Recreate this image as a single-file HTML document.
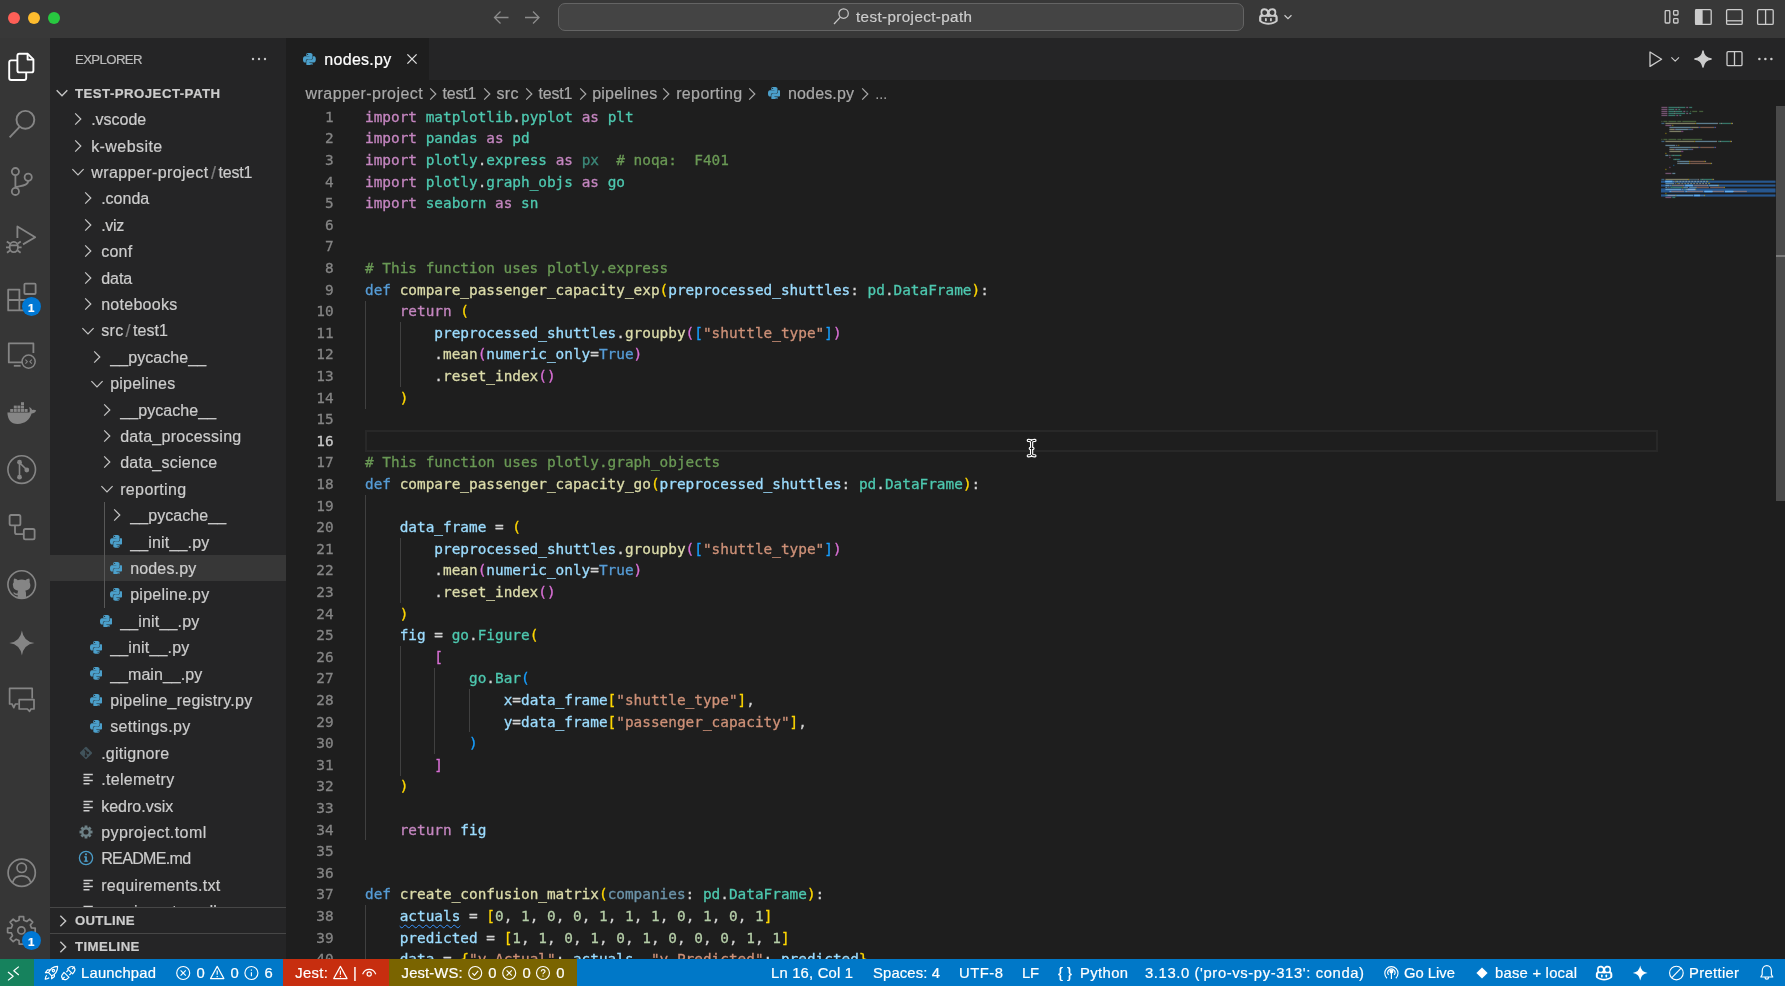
<!DOCTYPE html>
<html lang="en"><head><meta charset="utf-8"><title>nodes.py — test-project-path</title><style>
html,body{margin:0;padding:0;background:#1e1e1e;}
body{width:1785px;height:986px;position:relative;overflow:hidden;font-family:"Liberation Sans", sans-serif;-webkit-font-smoothing:antialiased;}
#root{position:absolute;left:0;top:0;width:1785px;height:986px;will-change:transform;}
.ab{position:absolute;display:block}
.t{position:absolute;white-space:pre;height:20px;line-height:20px;font-family:"Liberation Sans", sans-serif;-webkit-text-stroke:0.2px}
.sl{opacity:.55}
#code{position:absolute;left:0;top:0;width:1785px;height:960px;overflow:hidden;font-family:"DejaVu Sans Mono","Liberation Mono",monospace;font-size:14.4px;line-height:21.6px;color:#d4d4d4;-webkit-text-stroke:0.3px}
.ln{position:absolute;left:286px;width:47.6px;text-align:right;color:#858585;height:21.6px}
.ln.cur{color:#c6c6c6}
.cl{position:absolute;left:365px;white-space:pre;height:21.6px}
.ig{position:absolute;width:1px;background:#404040}
.k{color:#c586c0}.d{color:#569cd6}.f{color:#dcdcaa}.v{color:#9cdcfe}.c{color:#4ec9b0}.s{color:#ce9178}.n{color:#b5cea8}.m{color:#6a9955}
.b1{color:#ffd700}.b2{color:#da70d6}.b3{color:#179fff}
.dim{opacity:.62}
.sq{text-decoration:underline wavy #3794ff 1.25px;text-underline-offset:3px}
</style></head>
<body>
<div id="root">
<div class="ab" style="left:0;top:0;width:1785px;height:38px;background:#383838"></div>
<div class="ab" style="left:8px;top:12px;width:12px;height:12px;border-radius:6px;background:#fe5f57"></div>
<div class="ab" style="left:28px;top:12px;width:12px;height:12px;border-radius:6px;background:#febc2e"></div>
<div class="ab" style="left:48px;top:12px;width:12px;height:12px;border-radius:6px;background:#28c840"></div>
<svg class="ab" style="left:490px;top:7px" width="56" height="22" viewBox="490 7 56 22" fill="none" stroke="#8c8c8c" stroke-width="1.3"><path d="M508.5 17.5H494.5M500.5 11.5L494.5 17.5L500.5 23.5M525 17.5H539M533 11.5L539 17.5L533 23.5"/></svg>
<div class="ab" style="left:558px;top:2.8px;width:684px;height:26.4px;border:1px solid #646464;border-radius:7px;background:#444444;box-sizing:content-box"></div>
<svg class="ab" style="left:832px;top:8px" width="20" height="20" viewBox="832 8 20 20" fill="none" stroke="#c8c8c8" stroke-width="1.2"><circle cx="843.6" cy="13.6" r="4.7"/><path d="M840.4 17.2L834 24"/></svg>
<div class="t" style="left:856px;top:7.4px;font-size:15.2px;color:#cccccc;letter-spacing:0.391px;">test-project-path</div>
<svg class="ab" style="left:1257.1px;top:5.100000000000001px" width="22.799999999999997" height="22.799999999999997" viewBox="-12 -12 24 24"><path fill="#cccccc" fill-rule="evenodd" d="M-4.2 -8.6C-7 -8.6 -8.3 -7 -8.3 -4.6C-8.3 -3.6 -8.2 -2.8 -7.9 -2.2C-9.2 -1.2 -9.8 0 -9.8 1.4V4.2C-9.8 5 -9.4 5.6 -8.8 6C-6.4 7.8 -3.2 8.8 0 8.8C3.2 8.8 6.4 7.8 8.8 6C9.4 5.6 9.8 5 9.8 4.2V1.4C9.8 0 9.2 -1.2 7.9 -2.2C8.2 -2.8 8.3 -3.6 8.3 -4.6C8.3 -7 7 -8.6 4.2 -8.6C2.2 -8.6 0.8 -7.8 0 -6.4C-0.8 -7.8 -2.2 -8.6 -4.2 -8.6ZM-4.2 -6.6C-2.4 -6.6 -1.4 -5.6 -1.4 -4C-1.4 -2.4 -2.4 -1.6 -4.2 -1.6C-5.8 -1.6 -6.4 -2.4 -6.4 -4C-6.4 -5.6 -5.8 -6.6 -4.2 -6.6ZM4.2 -6.6C5.8 -6.6 6.4 -5.6 6.4 -4C6.4 -2.4 5.8 -1.6 4.2 -1.6C2.4 -1.6 1.4 -2.4 1.4 -4C1.4 -5.6 2.4 -6.6 4.2 -6.6ZM-7.4 0.6C-5 0.2 -2 0.2 0 0.6C2 0.2 5 0.2 7.4 0.6V4.6C5.4 6 2.6 6.8 0 6.8C-2.6 6.8 -5.4 6 -7.4 4.6Z"/><rect x="-3.6" y="1.6" width="1.9" height="3.6" rx="0.9" fill="#cccccc"/><rect x="1.7" y="1.6" width="1.9" height="3.6" rx="0.9" fill="#cccccc"/></svg>
<svg class="ab" style="left:1280px;top:8.5px" width="16" height="16" viewBox="-8 -8 16 16"><path d="M-3.472 -1.736L0 1.736L3.472 -1.736" fill="none" stroke="#cccccc" stroke-width="1.2"/></svg>
<svg class="ab" style="left:1660px;top:6px" width="120" height="22" viewBox="1660 6 120 22" fill="none" stroke="#cccccc" stroke-width="1.3"><rect x="1665.2" y="10.6" width="4.6" height="12.4" rx="0.8"/><rect x="1673.6" y="10.6" width="4.4" height="4.4" rx="0.8"/><rect x="1673.6" y="18.6" width="4.4" height="4.4" rx="0.8"/><rect x="1695.6" y="9.6" width="15.6" height="14.8" rx="1.2"/><rect x="1695.6" y="9.6" width="6.4" height="14.8" rx="1" fill="#cccccc"/><rect x="1726.6" y="9.6" width="15.6" height="14.8" rx="1.2"/><path d="M1726.6 20.8H1742.2"/><rect x="1757.6" y="9.6" width="15.6" height="14.8" rx="1.2"/><path d="M1765.6 9.6V24.4"/></svg>
<div class="ab" style="left:0;top:38px;width:50px;height:922px;background:#363636"></div>
<svg class="ab" style="left:0;top:38px" width="50" height="922" viewBox="0 38 50 922" fill="none" stroke-linejoin="round"><g stroke="#ffffff" stroke-width="1.9"><path d="M17.4 70.4V55.8Q17.4 53.8 19.4 53.8H27.8L33.4 59.4V70.4Q33.4 72.4 31.4 72.4H19.4Q17.4 72.4 17.4 70.4Z"/><path d="M27.6 54V59.6H33.2"/><path d="M17.4 60.4H11.2Q9.2 60.4 9.2 62.4V78Q9.2 80 11.2 80H24.2Q26.2 80 26.2 78V72.6"/></g><g stroke="#858585" stroke-width="1.9"><circle cx="25.4" cy="119.8" r="8.9"/><path d="M19.6 126.8L9.6 137.4"/></g><g stroke="#858585" stroke-width="1.8"><circle cx="15.4" cy="171.6" r="3.6"/><circle cx="28.2" cy="177.2" r="3.6"/><circle cx="15.4" cy="191.4" r="3.6"/><path d="M15.4 175.2V187.8M28.2 180.8C28.2 185.4 22 185.6 15.6 187.2"/></g><g stroke="#858585" stroke-width="1.8"><path d="M17.4 238V226.4L35.2 237.2L23 244.4"/><ellipse cx="13.8" cy="247" rx="4.2" ry="5.2"/><path d="M9.8 243.4L6.8 241.4M17.8 243.4L20.8 241.4M9.4 247.4H6M18.2 247.4H21.6M10 250.6L7 252.8M17.6 250.6L20.6 252.8M10 245.4H17.6"/></g><g stroke="#858585" stroke-width="1.8"><path d="M8.2 289.6H19.4V310.4H8.2ZM8.2 300H30.4V310.4H19.4M19.4 300V310.4"/><rect x="24.4" y="283.6" width="11.2" height="10.4" rx="1"/></g><g stroke="#858585" stroke-width="1.8"><path d="M22 362.4H8.8V343.4H33.4V353"/><path d="M13.8 365.8H20.6"/><circle cx="28.6" cy="361.6" r="6.6" stroke-width="1.5"/><path d="M25.4 359.6L27.4 361.6L25.4 363.6M31.8 359.6L29.8 361.6L31.8 363.6" stroke-width="1.1"/></g><g fill="#858585"><path d="M7.4 412.6H29.4C30.2 410.6 29.8 408.6 29 407.2C30.4 407.4 31.6 408.4 32.2 410C33.6 409.4 35.2 409.6 36.2 410.6C35.4 412.6 33.6 413.6 31.6 413.6C29.6 419.6 25.2 424 17.6 424C11 424 7.6 419.8 7.4 412.6Z"/><rect x="10.2" y="409" width="3" height="2.9"/><rect x="13.8" y="409" width="3" height="2.9"/><rect x="17.4" y="409" width="3" height="2.9"/><rect x="21" y="409" width="3" height="2.9"/><rect x="24.6" y="409" width="3" height="2.9"/><rect x="13.8" y="405.6" width="3" height="2.9"/><rect x="17.4" y="405.6" width="3" height="2.9"/><rect x="21" y="405.6" width="3" height="2.9"/><rect x="21" y="402.2" width="3" height="2.9"/></g><g stroke="#858585" stroke-width="1.6"><circle cx="21.7" cy="469.6" r="13.8"/><path d="M19.5 463V476M20.2 463.4L26 469"/></g><g fill="#858585"><circle cx="19.5" cy="462.2" r="2.4"/><circle cx="26.8" cy="470" r="2.4"/><circle cx="19.5" cy="477.2" r="2.4"/></g><g stroke="#858585" stroke-width="1.8"><rect x="9.6" y="515" width="10.8" height="10.4" rx="1.6"/><rect x="23.8" y="529" width="10.8" height="10.4" rx="1.6"/><path d="M15 525.6V532.2Q15 534.2 17 534.2H23.6"/></g><g stroke="#858585" stroke-width="1.6"><circle cx="21.7" cy="584.6" r="13.8"/></g><path fill="#858585" d="M17.6 598V595C15 595.6 14 594 13.2 592.8L14 592.3C15 593 15.6 593.9 17.6 593.5C17.6 592.4 17.7 591.4 18.2 590.8C14.8 590.4 13 588.4 13 585.6C12.6 584.2 13 583 13.8 582.2C13.6 581.2 13.6 579.8 14.2 578.6C15.6 578.6 16.8 579.4 17.8 580.2C19 579.8 20.4 579.6 21.7 579.6C23 579.6 24.4 579.8 25.6 580.2C26.6 579.4 27.8 578.6 29.2 578.6C29.8 579.8 29.8 581.2 29.6 582.2C30 583 30.4 584.2 30.4 585.6C30.4 588.4 28.6 590.4 25.2 590.8C25.8 591.4 26 592.4 26 593.6V598Z"/><path fill="#858585" d="M21.9 630.4Q23.412 641.488 34.5 643Q23.412 644.512 21.9 655.6Q20.387999999999998 644.512 9.299999999999999 643Q20.387999999999998 641.488 21.9 630.4Z"/><g stroke="#858585" stroke-width="1.7"><path d="M18.6 704H15.4L13.8 707.6L12 704H9.6V688.4H32.2V698.4"/><path d="M19.2 699.6H34V709H31L29.6 711.4L27.4 709H19.2Z"/></g><g stroke="#858585" stroke-width="1.7"><circle cx="21.7" cy="872.8" r="13.6"/><circle cx="21.7" cy="867.8" r="4.7"/><path d="M12.6 882.6C13.8 877.6 17 875.8 21.7 875.8C26.4 875.8 29.6 877.6 30.8 882.6"/></g><g stroke="#858585" stroke-width="1.7"><path d="M19.2 916.6L23.6 916.6L23.8 920.3L26.8 921.5L29.6 919.1L32.7 922.2L30.3 925.0L31.5 928.0L35.2 928.2L35.2 932.6L31.5 932.8L30.3 935.8L32.7 938.6L29.6 941.7L26.8 939.3L23.8 940.5L23.6 944.2L19.2 944.2L19.0 940.5L16.0 939.3L13.2 941.7L10.1 938.6L12.5 935.8L11.3 932.8L7.6 932.6L7.6 928.2L11.3 928.0L12.5 925.0L10.1 922.2L13.2 919.1L16.0 921.5L19.0 920.3Z"/><circle cx="21.4" cy="930.4" r="3.6"/></g></svg>
<div class="ab" style="left:21.799999999999997px;top:296.9px;width:19.2px;height:19.2px;border-radius:10px;background:#0078d4"></div>
<div class="t" style="left:28.099999999999998px;top:297.7px;font-size:11.5px;color:#ffffff;font-weight:700;">1</div>
<div class="ab" style="left:21.6px;top:931.1px;width:19.2px;height:19.2px;border-radius:10px;background:#0078d4"></div>
<div class="t" style="left:27.9px;top:931.9px;font-size:11.5px;color:#ffffff;font-weight:700;">1</div>
<div class="ab" style="left:50px;top:38px;width:236px;height:922px;background:#252526"></div>
<div class="t" style="left:75px;top:50.2px;font-size:13.2px;color:#bbbbbb;letter-spacing:-0.618px;">EXPLORER</div>
<svg class="ab" style="left:248px;top:52px" width="22" height="14" viewBox="248 52 22 14" fill="#c5c5c5"><circle cx="253" cy="59" r="1.2"/><circle cx="259" cy="59" r="1.2"/><circle cx="265" cy="59" r="1.2"/></svg>
<div class="ab" style="left:50px;top:554.8px;width:236px;height:26.4px;background:#373737"></div>
<div class="ab" style="left:103.6px;top:502px;width:1px;height:105.6px;background:#585858"></div>
<svg class="ab" style="left:54px;top:85px" width="16" height="16" viewBox="-8 -8 16 16"><path d="M-5.319999999999999 -2.6599999999999997L0 2.6599999999999997L5.319999999999999 -2.6599999999999997" fill="none" stroke="#c5c5c5" stroke-width="1.4"/></svg>
<div class="t" style="left:75px;top:84.3px;font-size:13.2px;color:#cccccc;font-weight:700;letter-spacing:0.483px;">TEST-PROJECT-PATH</div>
<svg class="ab" style="left:70px;top:111.2px" width="16" height="16" viewBox="-8 -8 16 16"><path d="M-2.8 -5.6L2.8 0L-2.8 5.6" fill="none" stroke="#c5c5c5" stroke-width="1.2"/></svg>
<div class="t" style="left:91.2px;top:110.2px;font-size:16px;color:#cccccc;letter-spacing:-0.023px;">.vscode</div>
<svg class="ab" style="left:70px;top:137.6px" width="16" height="16" viewBox="-8 -8 16 16"><path d="M-2.8 -5.6L2.8 0L-2.8 5.6" fill="none" stroke="#c5c5c5" stroke-width="1.2"/></svg>
<div class="t" style="left:91.2px;top:136.6px;font-size:16px;color:#cccccc;letter-spacing:0.428px;">k-website</div>
<svg class="ab" style="left:70px;top:164.3px" width="16" height="16" viewBox="-8 -8 16 16"><path d="M-5.6 -2.8L0 2.8L5.6 -2.8" fill="none" stroke="#c5c5c5" stroke-width="1.2"/></svg>
<div class="t" style="left:91.2px;top:163.0px;font-size:16px;color:#cccccc;letter-spacing:0.417px;">wrapper-project</div>
<div class="t" style="left:211px;top:162.7px;font-size:18px;color:#7c7c7c;">/</div>
<div class="t" style="left:218.5px;top:163.0px;font-size:16px;color:#cccccc;letter-spacing:-0.172px;">test1</div>
<svg class="ab" style="left:80px;top:190.39999999999998px" width="16" height="16" viewBox="-8 -8 16 16"><path d="M-2.8 -5.6L2.8 0L-2.8 5.6" fill="none" stroke="#c5c5c5" stroke-width="1.2"/></svg>
<div class="t" style="left:101.2px;top:189.4px;font-size:16px;color:#cccccc;letter-spacing:-0.009px;">.conda</div>
<svg class="ab" style="left:80px;top:216.8px" width="16" height="16" viewBox="-8 -8 16 16"><path d="M-2.8 -5.6L2.8 0L-2.8 5.6" fill="none" stroke="#c5c5c5" stroke-width="1.2"/></svg>
<div class="t" style="left:101.2px;top:215.8px;font-size:16px;color:#cccccc;letter-spacing:-0.333px;">.viz</div>
<svg class="ab" style="left:80px;top:243.2px" width="16" height="16" viewBox="-8 -8 16 16"><path d="M-2.8 -5.6L2.8 0L-2.8 5.6" fill="none" stroke="#c5c5c5" stroke-width="1.2"/></svg>
<div class="t" style="left:101.2px;top:242.2px;font-size:16px;color:#cccccc;letter-spacing:0.250px;">conf</div>
<svg class="ab" style="left:80px;top:269.59999999999997px" width="16" height="16" viewBox="-8 -8 16 16"><path d="M-2.8 -5.6L2.8 0L-2.8 5.6" fill="none" stroke="#c5c5c5" stroke-width="1.2"/></svg>
<div class="t" style="left:101.2px;top:268.6px;font-size:16px;color:#cccccc;letter-spacing:-0.047px;">data</div>
<svg class="ab" style="left:80px;top:296.0px" width="16" height="16" viewBox="-8 -8 16 16"><path d="M-2.8 -5.6L2.8 0L-2.8 5.6" fill="none" stroke="#c5c5c5" stroke-width="1.2"/></svg>
<div class="t" style="left:101.2px;top:295.0px;font-size:16px;color:#cccccc;letter-spacing:0.270px;">notebooks</div>
<svg class="ab" style="left:80px;top:322.7px" width="16" height="16" viewBox="-8 -8 16 16"><path d="M-5.6 -2.8L0 2.8L5.6 -2.8" fill="none" stroke="#c5c5c5" stroke-width="1.2"/></svg>
<div class="t" style="left:101.2px;top:321.4px;font-size:16px;color:#cccccc;letter-spacing:0.336px;">src</div>
<div class="t" style="left:125.6px;top:321.1px;font-size:18px;color:#7c7c7c;">/</div>
<div class="t" style="left:133px;top:321.4px;font-size:16px;color:#cccccc;letter-spacing:0.078px;">test1</div>
<svg class="ab" style="left:89px;top:348.8px" width="16" height="16" viewBox="-8 -8 16 16"><path d="M-2.8 -5.6L2.8 0L-2.8 5.6" fill="none" stroke="#c5c5c5" stroke-width="1.2"/></svg>
<div class="t" style="left:110.2px;top:347.8px;font-size:16px;color:#cccccc;letter-spacing:0.081px;">__pycache__</div>
<svg class="ab" style="left:89px;top:375.5px" width="16" height="16" viewBox="-8 -8 16 16"><path d="M-5.6 -2.8L0 2.8L5.6 -2.8" fill="none" stroke="#c5c5c5" stroke-width="1.2"/></svg>
<div class="t" style="left:110.2px;top:374.2px;font-size:16px;color:#cccccc;letter-spacing:0.230px;">pipelines</div>
<svg class="ab" style="left:99px;top:401.59999999999997px" width="16" height="16" viewBox="-8 -8 16 16"><path d="M-2.8 -5.6L2.8 0L-2.8 5.6" fill="none" stroke="#c5c5c5" stroke-width="1.2"/></svg>
<div class="t" style="left:120.2px;top:400.6px;font-size:16px;color:#cccccc;letter-spacing:0.081px;">__pycache__</div>
<svg class="ab" style="left:99px;top:427.99999999999994px" width="16" height="16" viewBox="-8 -8 16 16"><path d="M-2.8 -5.6L2.8 0L-2.8 5.6" fill="none" stroke="#c5c5c5" stroke-width="1.2"/></svg>
<div class="t" style="left:120.2px;top:427.0px;font-size:16px;color:#cccccc;letter-spacing:0.256px;">data_processing</div>
<svg class="ab" style="left:99px;top:454.4px" width="16" height="16" viewBox="-8 -8 16 16"><path d="M-2.8 -5.6L2.8 0L-2.8 5.6" fill="none" stroke="#c5c5c5" stroke-width="1.2"/></svg>
<div class="t" style="left:120.2px;top:453.4px;font-size:16px;color:#cccccc;letter-spacing:0.246px;">data_science</div>
<svg class="ab" style="left:99px;top:481.09999999999997px" width="16" height="16" viewBox="-8 -8 16 16"><path d="M-5.6 -2.8L0 2.8L5.6 -2.8" fill="none" stroke="#c5c5c5" stroke-width="1.2"/></svg>
<div class="t" style="left:120.2px;top:479.8px;font-size:16px;color:#cccccc;letter-spacing:0.355px;">reporting</div>
<svg class="ab" style="left:109px;top:507.20000000000005px" width="16" height="16" viewBox="-8 -8 16 16"><path d="M-2.8 -5.6L2.8 0L-2.8 5.6" fill="none" stroke="#c5c5c5" stroke-width="1.2"/></svg>
<div class="t" style="left:130.2px;top:506.2px;font-size:16px;color:#cccccc;letter-spacing:0.081px;">__pycache__</div>
<svg class="ab" style="left:109.6px;top:535.3px" width="12.8" height="12.8" viewBox="0 0 24 24"><path fill="#4b9fca" d="M14.25.18l.9.2.73.26.59.3.45.32.34.34.25.34.16.33.1.3.04.26.02.2-.01.13V8.5l-.05.63-.13.55-.21.46-.26.38-.3.31-.33.25-.35.19-.35.14-.33.1-.3.07-.26.04-.21.02H8.77l-.69.05-.59.14-.5.22-.41.27-.33.32-.27.35-.2.36-.15.37-.1.35-.07.32-.04.27-.02.21v3.06H3.17l-.21-.03-.28-.07-.32-.12-.35-.18-.36-.26-.36-.36-.35-.46-.32-.59-.28-.73-.21-.88-.14-1.05-.05-1.23.06-1.22.16-1.04.24-.87.32-.71.36-.57.4-.44.42-.33.42-.24.4-.16.36-.1.32-.05.24-.01h.16l.06.01h8.16v-.83H6.18l-.01-2.75-.02-.37.05-.34.11-.31.17-.28.25-.26.31-.23.38-.2.44-.18.51-.15.58-.12.64-.1.71-.06.77-.04.84-.02 1.27.05zm-6.3 1.98l-.23.33-.08.41.08.41.23.34.33.22.41.09.41-.09.33-.22.23-.34.08-.41-.08-.41-.23-.33-.33-.22-.41-.09-.41.09zm13.09 3.95l.28.06.32.12.35.18.36.27.36.35.35.47.32.59.28.73.21.88.14 1.04.05 1.23-.06 1.23-.16 1.04-.24.86-.32.71-.36.57-.4.45-.42.33-.42.24-.4.16-.36.09-.32.05-.24.02-.16-.01h-8.22v.82h5.84l.01 2.76.02.36-.05.34-.11.31-.17.29-.25.25-.31.24-.38.2-.44.17-.51.15-.58.13-.64.09-.71.07-.77.04-.84.01-1.27-.04-1.07-.14-.9-.2-.73-.25-.59-.3-.45-.33-.34-.34-.25-.34-.16-.33-.1-.3-.04-.25-.02-.2.01-.13v-5.34l.05-.64.13-.54.21-.46.26-.38.3-.32.33-.24.35-.2.35-.14.33-.1.3-.06.26-.04.21-.02.13-.01h5.84l.69-.05.59-.14.5-.21.41-.28.33-.32.27-.35.2-.36.15-.36.1-.35.07-.32.04-.28.02-.21V6.07h2.09l.14.01zm-6.47 14.25l-.23.33-.08.41.08.41.23.33.33.23.41.08.41-.08.33-.23.23-.33.08-.41-.08-.41-.23-.33-.33-.23-.41-.08-.41.08z"/></svg>
<div class="t" style="left:130.2px;top:532.6px;font-size:16px;color:#cccccc;letter-spacing:0.161px;">__init__.py</div>
<svg class="ab" style="left:109.6px;top:561.7px" width="12.8" height="12.8" viewBox="0 0 24 24"><path fill="#4b9fca" d="M14.25.18l.9.2.73.26.59.3.45.32.34.34.25.34.16.33.1.3.04.26.02.2-.01.13V8.5l-.05.63-.13.55-.21.46-.26.38-.3.31-.33.25-.35.19-.35.14-.33.1-.3.07-.26.04-.21.02H8.77l-.69.05-.59.14-.5.22-.41.27-.33.32-.27.35-.2.36-.15.37-.1.35-.07.32-.04.27-.02.21v3.06H3.17l-.21-.03-.28-.07-.32-.12-.35-.18-.36-.26-.36-.36-.35-.46-.32-.59-.28-.73-.21-.88-.14-1.05-.05-1.23.06-1.22.16-1.04.24-.87.32-.71.36-.57.4-.44.42-.33.42-.24.4-.16.36-.1.32-.05.24-.01h.16l.06.01h8.16v-.83H6.18l-.01-2.75-.02-.37.05-.34.11-.31.17-.28.25-.26.31-.23.38-.2.44-.18.51-.15.58-.12.64-.1.71-.06.77-.04.84-.02 1.27.05zm-6.3 1.98l-.23.33-.08.41.08.41.23.34.33.22.41.09.41-.09.33-.22.23-.34.08-.41-.08-.41-.23-.33-.33-.22-.41-.09-.41.09zm13.09 3.95l.28.06.32.12.35.18.36.27.36.35.35.47.32.59.28.73.21.88.14 1.04.05 1.23-.06 1.23-.16 1.04-.24.86-.32.71-.36.57-.4.45-.42.33-.42.24-.4.16-.36.09-.32.05-.24.02-.16-.01h-8.22v.82h5.84l.01 2.76.02.36-.05.34-.11.31-.17.29-.25.25-.31.24-.38.2-.44.17-.51.15-.58.13-.64.09-.71.07-.77.04-.84.01-1.27-.04-1.07-.14-.9-.2-.73-.25-.59-.3-.45-.33-.34-.34-.25-.34-.16-.33-.1-.3-.04-.25-.02-.2.01-.13v-5.34l.05-.64.13-.54.21-.46.26-.38.3-.32.33-.24.35-.2.35-.14.33-.1.3-.06.26-.04.21-.02.13-.01h5.84l.69-.05.59-.14.5-.21.41-.28.33-.32.27-.35.2-.36.15-.36.1-.35.07-.32.04-.28.02-.21V6.07h2.09l.14.01zm-6.47 14.25l-.23.33-.08.41.08.41.23.33.33.23.41.08.41-.08.33-.23.23-.33.08-.41-.08-.41-.23-.33-.33-.23-.41-.08-.41.08z"/></svg>
<div class="t" style="left:130.2px;top:559.0px;font-size:16px;color:#cccccc;letter-spacing:0.152px;">nodes.py</div>
<svg class="ab" style="left:109.6px;top:588.1px" width="12.8" height="12.8" viewBox="0 0 24 24"><path fill="#4b9fca" d="M14.25.18l.9.2.73.26.59.3.45.32.34.34.25.34.16.33.1.3.04.26.02.2-.01.13V8.5l-.05.63-.13.55-.21.46-.26.38-.3.31-.33.25-.35.19-.35.14-.33.1-.3.07-.26.04-.21.02H8.77l-.69.05-.59.14-.5.22-.41.27-.33.32-.27.35-.2.36-.15.37-.1.35-.07.32-.04.27-.02.21v3.06H3.17l-.21-.03-.28-.07-.32-.12-.35-.18-.36-.26-.36-.36-.35-.46-.32-.59-.28-.73-.21-.88-.14-1.05-.05-1.23.06-1.22.16-1.04.24-.87.32-.71.36-.57.4-.44.42-.33.42-.24.4-.16.36-.1.32-.05.24-.01h.16l.06.01h8.16v-.83H6.18l-.01-2.75-.02-.37.05-.34.11-.31.17-.28.25-.26.31-.23.38-.2.44-.18.51-.15.58-.12.64-.1.71-.06.77-.04.84-.02 1.27.05zm-6.3 1.98l-.23.33-.08.41.08.41.23.34.33.22.41.09.41-.09.33-.22.23-.34.08-.41-.08-.41-.23-.33-.33-.22-.41-.09-.41.09zm13.09 3.95l.28.06.32.12.35.18.36.27.36.35.35.47.32.59.28.73.21.88.14 1.04.05 1.23-.06 1.23-.16 1.04-.24.86-.32.71-.36.57-.4.45-.42.33-.42.24-.4.16-.36.09-.32.05-.24.02-.16-.01h-8.22v.82h5.84l.01 2.76.02.36-.05.34-.11.31-.17.29-.25.25-.31.24-.38.2-.44.17-.51.15-.58.13-.64.09-.71.07-.77.04-.84.01-1.27-.04-1.07-.14-.9-.2-.73-.25-.59-.3-.45-.33-.34-.34-.25-.34-.16-.33-.1-.3-.04-.25-.02-.2.01-.13v-5.34l.05-.64.13-.54.21-.46.26-.38.3-.32.33-.24.35-.2.35-.14.33-.1.3-.06.26-.04.21-.02.13-.01h5.84l.69-.05.59-.14.5-.21.41-.28.33-.32.27-.35.2-.36.15-.36.1-.35.07-.32.04-.28.02-.21V6.07h2.09l.14.01zm-6.47 14.25l-.23.33-.08.41.08.41.23.33.33.23.41.08.41-.08.33-.23.23-.33.08-.41-.08-.41-.23-.33-.33-.23-.41-.08-.41.08z"/></svg>
<div class="t" style="left:130.2px;top:585.4px;font-size:16px;color:#cccccc;letter-spacing:0.250px;">pipeline.py</div>
<svg class="ab" style="left:99.6px;top:614.5px" width="12.8" height="12.8" viewBox="0 0 24 24"><path fill="#4b9fca" d="M14.25.18l.9.2.73.26.59.3.45.32.34.34.25.34.16.33.1.3.04.26.02.2-.01.13V8.5l-.05.63-.13.55-.21.46-.26.38-.3.31-.33.25-.35.19-.35.14-.33.1-.3.07-.26.04-.21.02H8.77l-.69.05-.59.14-.5.22-.41.27-.33.32-.27.35-.2.36-.15.37-.1.35-.07.32-.04.27-.02.21v3.06H3.17l-.21-.03-.28-.07-.32-.12-.35-.18-.36-.26-.36-.36-.35-.46-.32-.59-.28-.73-.21-.88-.14-1.05-.05-1.23.06-1.22.16-1.04.24-.87.32-.71.36-.57.4-.44.42-.33.42-.24.4-.16.36-.1.32-.05.24-.01h.16l.06.01h8.16v-.83H6.18l-.01-2.75-.02-.37.05-.34.11-.31.17-.28.25-.26.31-.23.38-.2.44-.18.51-.15.58-.12.64-.1.71-.06.77-.04.84-.02 1.27.05zm-6.3 1.98l-.23.33-.08.41.08.41.23.34.33.22.41.09.41-.09.33-.22.23-.34.08-.41-.08-.41-.23-.33-.33-.22-.41-.09-.41.09zm13.09 3.95l.28.06.32.12.35.18.36.27.36.35.35.47.32.59.28.73.21.88.14 1.04.05 1.23-.06 1.23-.16 1.04-.24.86-.32.71-.36.57-.4.45-.42.33-.42.24-.4.16-.36.09-.32.05-.24.02-.16-.01h-8.22v.82h5.84l.01 2.76.02.36-.05.34-.11.31-.17.29-.25.25-.31.24-.38.2-.44.17-.51.15-.58.13-.64.09-.71.07-.77.04-.84.01-1.27-.04-1.07-.14-.9-.2-.73-.25-.59-.3-.45-.33-.34-.34-.25-.34-.16-.33-.1-.3-.04-.25-.02-.2.01-.13v-5.34l.05-.64.13-.54.21-.46.26-.38.3-.32.33-.24.35-.2.35-.14.33-.1.3-.06.26-.04.21-.02.13-.01h5.84l.69-.05.59-.14.5-.21.41-.28.33-.32.27-.35.2-.36.15-.36.1-.35.07-.32.04-.28.02-.21V6.07h2.09l.14.01zm-6.47 14.25l-.23.33-.08.41.08.41.23.33.33.23.41.08.41-.08.33-.23.23-.33.08-.41-.08-.41-.23-.33-.33-.23-.41-.08-.41.08z"/></svg>
<div class="t" style="left:120.2px;top:611.8px;font-size:16px;color:#cccccc;letter-spacing:0.161px;">__init__.py</div>
<svg class="ab" style="left:89.6px;top:640.9px" width="12.8" height="12.8" viewBox="0 0 24 24"><path fill="#4b9fca" d="M14.25.18l.9.2.73.26.59.3.45.32.34.34.25.34.16.33.1.3.04.26.02.2-.01.13V8.5l-.05.63-.13.55-.21.46-.26.38-.3.31-.33.25-.35.19-.35.14-.33.1-.3.07-.26.04-.21.02H8.77l-.69.05-.59.14-.5.22-.41.27-.33.32-.27.35-.2.36-.15.37-.1.35-.07.32-.04.27-.02.21v3.06H3.17l-.21-.03-.28-.07-.32-.12-.35-.18-.36-.26-.36-.36-.35-.46-.32-.59-.28-.73-.21-.88-.14-1.05-.05-1.23.06-1.22.16-1.04.24-.87.32-.71.36-.57.4-.44.42-.33.42-.24.4-.16.36-.1.32-.05.24-.01h.16l.06.01h8.16v-.83H6.18l-.01-2.75-.02-.37.05-.34.11-.31.17-.28.25-.26.31-.23.38-.2.44-.18.51-.15.58-.12.64-.1.71-.06.77-.04.84-.02 1.27.05zm-6.3 1.98l-.23.33-.08.41.08.41.23.34.33.22.41.09.41-.09.33-.22.23-.34.08-.41-.08-.41-.23-.33-.33-.22-.41-.09-.41.09zm13.09 3.95l.28.06.32.12.35.18.36.27.36.35.35.47.32.59.28.73.21.88.14 1.04.05 1.23-.06 1.23-.16 1.04-.24.86-.32.71-.36.57-.4.45-.42.33-.42.24-.4.16-.36.09-.32.05-.24.02-.16-.01h-8.22v.82h5.84l.01 2.76.02.36-.05.34-.11.31-.17.29-.25.25-.31.24-.38.2-.44.17-.51.15-.58.13-.64.09-.71.07-.77.04-.84.01-1.27-.04-1.07-.14-.9-.2-.73-.25-.59-.3-.45-.33-.34-.34-.25-.34-.16-.33-.1-.3-.04-.25-.02-.2.01-.13v-5.34l.05-.64.13-.54.21-.46.26-.38.3-.32.33-.24.35-.2.35-.14.33-.1.3-.06.26-.04.21-.02.13-.01h5.84l.69-.05.59-.14.5-.21.41-.28.33-.32.27-.35.2-.36.15-.36.1-.35.07-.32.04-.28.02-.21V6.07h2.09l.14.01zm-6.47 14.25l-.23.33-.08.41.08.41.23.33.33.23.41.08.41-.08.33-.23.23-.33.08-.41-.08-.41-.23-.33-.33-.23-.41-.08-.41.08z"/></svg>
<div class="t" style="left:110.2px;top:638.2px;font-size:16px;color:#cccccc;letter-spacing:0.161px;">__init__.py</div>
<svg class="ab" style="left:89.6px;top:667.3px" width="12.8" height="12.8" viewBox="0 0 24 24"><path fill="#4b9fca" d="M14.25.18l.9.2.73.26.59.3.45.32.34.34.25.34.16.33.1.3.04.26.02.2-.01.13V8.5l-.05.63-.13.55-.21.46-.26.38-.3.31-.33.25-.35.19-.35.14-.33.1-.3.07-.26.04-.21.02H8.77l-.69.05-.59.14-.5.22-.41.27-.33.32-.27.35-.2.36-.15.37-.1.35-.07.32-.04.27-.02.21v3.06H3.17l-.21-.03-.28-.07-.32-.12-.35-.18-.36-.26-.36-.36-.35-.46-.32-.59-.28-.73-.21-.88-.14-1.05-.05-1.23.06-1.22.16-1.04.24-.87.32-.71.36-.57.4-.44.42-.33.42-.24.4-.16.36-.1.32-.05.24-.01h.16l.06.01h8.16v-.83H6.18l-.01-2.75-.02-.37.05-.34.11-.31.17-.28.25-.26.31-.23.38-.2.44-.18.51-.15.58-.12.64-.1.71-.06.77-.04.84-.02 1.27.05zm-6.3 1.98l-.23.33-.08.41.08.41.23.34.33.22.41.09.41-.09.33-.22.23-.34.08-.41-.08-.41-.23-.33-.33-.22-.41-.09-.41.09zm13.09 3.95l.28.06.32.12.35.18.36.27.36.35.35.47.32.59.28.73.21.88.14 1.04.05 1.23-.06 1.23-.16 1.04-.24.86-.32.71-.36.57-.4.45-.42.33-.42.24-.4.16-.36.09-.32.05-.24.02-.16-.01h-8.22v.82h5.84l.01 2.76.02.36-.05.34-.11.31-.17.29-.25.25-.31.24-.38.2-.44.17-.51.15-.58.13-.64.09-.71.07-.77.04-.84.01-1.27-.04-1.07-.14-.9-.2-.73-.25-.59-.3-.45-.33-.34-.34-.25-.34-.16-.33-.1-.3-.04-.25-.02-.2.01-.13v-5.34l.05-.64.13-.54.21-.46.26-.38.3-.32.33-.24.35-.2.35-.14.33-.1.3-.06.26-.04.21-.02.13-.01h5.84l.69-.05.59-.14.5-.21.41-.28.33-.32.27-.35.2-.36.15-.36.1-.35.07-.32.04-.28.02-.21V6.07h2.09l.14.01zm-6.47 14.25l-.23.33-.08.41.08.41.23.33.33.23.41.08.41-.08.33-.23.23-.33.08-.41-.08-.41-.23-.33-.33-.23-.41-.08-.41.08z"/></svg>
<div class="t" style="left:110.2px;top:664.6px;font-size:16px;color:#cccccc;letter-spacing:0.037px;">__main__.py</div>
<svg class="ab" style="left:89.6px;top:693.7px" width="12.8" height="12.8" viewBox="0 0 24 24"><path fill="#4b9fca" d="M14.25.18l.9.2.73.26.59.3.45.32.34.34.25.34.16.33.1.3.04.26.02.2-.01.13V8.5l-.05.63-.13.55-.21.46-.26.38-.3.31-.33.25-.35.19-.35.14-.33.1-.3.07-.26.04-.21.02H8.77l-.69.05-.59.14-.5.22-.41.27-.33.32-.27.35-.2.36-.15.37-.1.35-.07.32-.04.27-.02.21v3.06H3.17l-.21-.03-.28-.07-.32-.12-.35-.18-.36-.26-.36-.36-.35-.46-.32-.59-.28-.73-.21-.88-.14-1.05-.05-1.23.06-1.22.16-1.04.24-.87.32-.71.36-.57.4-.44.42-.33.42-.24.4-.16.36-.1.32-.05.24-.01h.16l.06.01h8.16v-.83H6.18l-.01-2.75-.02-.37.05-.34.11-.31.17-.28.25-.26.31-.23.38-.2.44-.18.51-.15.58-.12.64-.1.71-.06.77-.04.84-.02 1.27.05zm-6.3 1.98l-.23.33-.08.41.08.41.23.34.33.22.41.09.41-.09.33-.22.23-.34.08-.41-.08-.41-.23-.33-.33-.22-.41-.09-.41.09zm13.09 3.95l.28.06.32.12.35.18.36.27.36.35.35.47.32.59.28.73.21.88.14 1.04.05 1.23-.06 1.23-.16 1.04-.24.86-.32.71-.36.57-.4.45-.42.33-.42.24-.4.16-.36.09-.32.05-.24.02-.16-.01h-8.22v.82h5.84l.01 2.76.02.36-.05.34-.11.31-.17.29-.25.25-.31.24-.38.2-.44.17-.51.15-.58.13-.64.09-.71.07-.77.04-.84.01-1.27-.04-1.07-.14-.9-.2-.73-.25-.59-.3-.45-.33-.34-.34-.25-.34-.16-.33-.1-.3-.04-.25-.02-.2.01-.13v-5.34l.05-.64.13-.54.21-.46.26-.38.3-.32.33-.24.35-.2.35-.14.33-.1.3-.06.26-.04.21-.02.13-.01h5.84l.69-.05.59-.14.5-.21.41-.28.33-.32.27-.35.2-.36.15-.36.1-.35.07-.32.04-.28.02-.21V6.07h2.09l.14.01zm-6.47 14.25l-.23.33-.08.41.08.41.23.33.33.23.41.08.41-.08.33-.23.23-.33.08-.41-.08-.41-.23-.33-.33-.23-.41-.08-.41.08z"/></svg>
<div class="t" style="left:110.2px;top:691.0px;font-size:16px;color:#cccccc;letter-spacing:0.280px;">pipeline_registry.py</div>
<svg class="ab" style="left:89.6px;top:720.1px" width="12.8" height="12.8" viewBox="0 0 24 24"><path fill="#4b9fca" d="M14.25.18l.9.2.73.26.59.3.45.32.34.34.25.34.16.33.1.3.04.26.02.2-.01.13V8.5l-.05.63-.13.55-.21.46-.26.38-.3.31-.33.25-.35.19-.35.14-.33.1-.3.07-.26.04-.21.02H8.77l-.69.05-.59.14-.5.22-.41.27-.33.32-.27.35-.2.36-.15.37-.1.35-.07.32-.04.27-.02.21v3.06H3.17l-.21-.03-.28-.07-.32-.12-.35-.18-.36-.26-.36-.36-.35-.46-.32-.59-.28-.73-.21-.88-.14-1.05-.05-1.23.06-1.22.16-1.04.24-.87.32-.71.36-.57.4-.44.42-.33.42-.24.4-.16.36-.1.32-.05.24-.01h.16l.06.01h8.16v-.83H6.18l-.01-2.75-.02-.37.05-.34.11-.31.17-.28.25-.26.31-.23.38-.2.44-.18.51-.15.58-.12.64-.1.71-.06.77-.04.84-.02 1.27.05zm-6.3 1.98l-.23.33-.08.41.08.41.23.34.33.22.41.09.41-.09.33-.22.23-.34.08-.41-.08-.41-.23-.33-.33-.22-.41-.09-.41.09zm13.09 3.95l.28.06.32.12.35.18.36.27.36.35.35.47.32.59.28.73.21.88.14 1.04.05 1.23-.06 1.23-.16 1.04-.24.86-.32.71-.36.57-.4.45-.42.33-.42.24-.4.16-.36.09-.32.05-.24.02-.16-.01h-8.22v.82h5.84l.01 2.76.02.36-.05.34-.11.31-.17.29-.25.25-.31.24-.38.2-.44.17-.51.15-.58.13-.64.09-.71.07-.77.04-.84.01-1.27-.04-1.07-.14-.9-.2-.73-.25-.59-.3-.45-.33-.34-.34-.25-.34-.16-.33-.1-.3-.04-.25-.02-.2.01-.13v-5.34l.05-.64.13-.54.21-.46.26-.38.3-.32.33-.24.35-.2.35-.14.33-.1.3-.06.26-.04.21-.02.13-.01h5.84l.69-.05.59-.14.5-.21.41-.28.33-.32.27-.35.2-.36.15-.36.1-.35.07-.32.04-.28.02-.21V6.07h2.09l.14.01zm-6.47 14.25l-.23.33-.08.41.08.41.23.33.33.23.41.08.41-.08.33-.23.23-.33.08-.41-.08-.41-.23-.33-.33-.23-.41-.08-.41.08z"/></svg>
<div class="t" style="left:110.2px;top:717.4px;font-size:16px;color:#cccccc;letter-spacing:0.352px;">settings.py</div>
<svg class="ab" style="left:78px;top:744.8px" width="16" height="16" viewBox="-8 -8 16 16"><rect x="-4.6" y="-4.6" width="9.2" height="9.2" rx="1" transform="rotate(45)" fill="#41535b"/><path d="M-1.5 -3.5L1.8 -0.2M-0.2 -2.2V3" stroke="#252526" stroke-width="1.2" fill="none"/><circle cx="-0.2" cy="3" r="1.2" fill="#252526"/><circle cx="2" cy="0" r="1.2" fill="#252526"/></svg>
<div class="t" style="left:101.2px;top:743.8px;font-size:16px;color:#cccccc;letter-spacing:0.241px;">.gitignore</div>
<svg class="ab" style="left:80.4px;top:771.4000000000001px" width="16" height="16" viewBox="-8 -8 16 16" stroke="#d0d0d0" stroke-width="1.5"><path d="M-4.5 -4.6H4.8M-4.5 -1.5H1.5M-4.5 1.6H4.8M-4.5 4.7H1.5"/></svg>
<div class="t" style="left:101.2px;top:770.2px;font-size:16px;color:#cccccc;letter-spacing:0.306px;">.telemetry</div>
<svg class="ab" style="left:80.4px;top:797.8000000000001px" width="16" height="16" viewBox="-8 -8 16 16" stroke="#d0d0d0" stroke-width="1.5"><path d="M-4.5 -4.6H4.8M-4.5 -1.5H1.5M-4.5 1.6H4.8M-4.5 4.7H1.5"/></svg>
<div class="t" style="left:101.2px;top:796.6px;font-size:16px;color:#cccccc;letter-spacing:-0.003px;">kedro.vsix</div>
<svg class="ab" style="left:78.3px;top:824.2px" width="16" height="16" viewBox="-8 -8 16 16" fill="#6d8086"><rect x="-1.4" y="-6.5" width="2.8" height="3.2" transform="rotate(0)"/><rect x="-1.4" y="-6.5" width="2.8" height="3.2" transform="rotate(45)"/><rect x="-1.4" y="-6.5" width="2.8" height="3.2" transform="rotate(90)"/><rect x="-1.4" y="-6.5" width="2.8" height="3.2" transform="rotate(135)"/><rect x="-1.4" y="-6.5" width="2.8" height="3.2" transform="rotate(180)"/><rect x="-1.4" y="-6.5" width="2.8" height="3.2" transform="rotate(225)"/><rect x="-1.4" y="-6.5" width="2.8" height="3.2" transform="rotate(270)"/><rect x="-1.4" y="-6.5" width="2.8" height="3.2" transform="rotate(315)"/><circle r="3.7" fill="none" stroke="#6d8086" stroke-width="2.2"/></svg>
<div class="t" style="left:101.2px;top:823.0px;font-size:16px;color:#cccccc;letter-spacing:0.416px;">pyproject.toml</div>
<svg class="ab" style="left:78px;top:850.4px" width="16" height="16" viewBox="-8 -8 16 16"><circle r="6.6" fill="none" stroke="#4b9cc7" stroke-width="1.3"/><rect x="-0.9" y="-1.6" width="1.8" height="5.2" fill="#4b9cc7"/><rect x="-2" y="-1.6" width="2" height="1.1" fill="#4b9cc7"/><rect x="-2.2" y="2.6" width="4.4" height="1.1" fill="#4b9cc7"/><circle cy="-3.7" r="1.1" fill="#4b9cc7"/></svg>
<div class="t" style="left:101.2px;top:849.4px;font-size:16px;color:#cccccc;letter-spacing:-0.641px;">README.md</div>
<svg class="ab" style="left:80.4px;top:877.0px" width="16" height="16" viewBox="-8 -8 16 16" stroke="#d0d0d0" stroke-width="1.5"><path d="M-4.5 -4.6H4.8M-4.5 -1.5H1.5M-4.5 1.6H4.8M-4.5 4.7H1.5"/></svg>
<div class="t" style="left:101.2px;top:875.8px;font-size:16px;color:#cccccc;letter-spacing:0.285px;">requirements.txt</div>
<svg class="ab" style="left:80.4px;top:903.4000000000001px" width="16" height="16" viewBox="-8 -8 16 16" stroke="#d0d0d0" stroke-width="1.5"><path d="M-4.5 -4.6H4.8M-4.5 -1.5H1.5M-4.5 1.6H4.8M-4.5 4.7H1.5"/></svg>
<div class="t" style="left:101.2px;top:902.2px;font-size:16px;color:#cccccc;">session_store.db</div>
<div class="ab" style="left:50px;top:906.8px;width:236px;height:53.2px;background:#252526;border-top:1px solid #474747"></div>
<div class="ab" style="left:50px;top:933.2px;width:236px;height:1px;background:#474747"></div>
<svg class="ab" style="left:55px;top:912.5px" width="16" height="16" viewBox="-8 -8 16 16"><path d="M-2.6599999999999997 -5.319999999999999L2.6599999999999997 0L-2.6599999999999997 5.319999999999999" fill="none" stroke="#c5c5c5" stroke-width="1.4"/></svg>
<div class="t" style="left:75px;top:910.9px;font-size:13.2px;color:#cccccc;font-weight:700;letter-spacing:0.285px;">OUTLINE</div>
<svg class="ab" style="left:55px;top:938.5px" width="16" height="16" viewBox="-8 -8 16 16"><path d="M-2.6599999999999997 -5.319999999999999L2.6599999999999997 0L-2.6599999999999997 5.319999999999999" fill="none" stroke="#c5c5c5" stroke-width="1.4"/></svg>
<div class="t" style="left:75px;top:937.1px;font-size:13.2px;color:#cccccc;font-weight:700;letter-spacing:0.408px;">TIMELINE</div>
<div class="ab" style="left:286px;top:38px;width:1499px;height:42px;background:#252526"></div>
<div class="ab" style="left:286px;top:38px;width:143px;height:42px;background:#1e1e1e"></div>
<div class="ab" style="left:286px;top:80px;width:1499px;height:880px;background:#1e1e1e"></div>
<svg class="ab" style="left:303.4px;top:52.5px" width="12.8" height="12.8" viewBox="0 0 24 24"><path fill="#4b9fca" d="M14.25.18l.9.2.73.26.59.3.45.32.34.34.25.34.16.33.1.3.04.26.02.2-.01.13V8.5l-.05.63-.13.55-.21.46-.26.38-.3.31-.33.25-.35.19-.35.14-.33.1-.3.07-.26.04-.21.02H8.77l-.69.05-.59.14-.5.22-.41.27-.33.32-.27.35-.2.36-.15.37-.1.35-.07.32-.04.27-.02.21v3.06H3.17l-.21-.03-.28-.07-.32-.12-.35-.18-.36-.26-.36-.36-.35-.46-.32-.59-.28-.73-.21-.88-.14-1.05-.05-1.23.06-1.22.16-1.04.24-.87.32-.71.36-.57.4-.44.42-.33.42-.24.4-.16.36-.1.32-.05.24-.01h.16l.06.01h8.16v-.83H6.18l-.01-2.75-.02-.37.05-.34.11-.31.17-.28.25-.26.31-.23.38-.2.44-.18.51-.15.58-.12.64-.1.71-.06.77-.04.84-.02 1.27.05zm-6.3 1.98l-.23.33-.08.41.08.41.23.34.33.22.41.09.41-.09.33-.22.23-.34.08-.41-.08-.41-.23-.33-.33-.22-.41-.09-.41.09zm13.09 3.95l.28.06.32.12.35.18.36.27.36.35.35.47.32.59.28.73.21.88.14 1.04.05 1.23-.06 1.23-.16 1.04-.24.86-.32.71-.36.57-.4.45-.42.33-.42.24-.4.16-.36.09-.32.05-.24.02-.16-.01h-8.22v.82h5.84l.01 2.76.02.36-.05.34-.11.31-.17.29-.25.25-.31.24-.38.2-.44.17-.51.15-.58.13-.64.09-.71.07-.77.04-.84.01-1.27-.04-1.07-.14-.9-.2-.73-.25-.59-.3-.45-.33-.34-.34-.25-.34-.16-.33-.1-.3-.04-.25-.02-.2.01-.13v-5.34l.05-.64.13-.54.21-.46.26-.38.3-.32.33-.24.35-.2.35-.14.33-.1.3-.06.26-.04.21-.02.13-.01h5.84l.69-.05.59-.14.5-.21.41-.28.33-.32.27-.35.2-.36.15-.36.1-.35.07-.32.04-.28.02-.21V6.07h2.09l.14.01zm-6.47 14.25l-.23.33-.08.41.08.41.23.33.33.23.41.08.41-.08.33-.23.23-.33.08-.41-.08-.41-.23-.33-.33-.23-.41-.08-.41.08z"/></svg>
<div class="t" style="left:324.3px;top:49.8px;font-size:16px;color:#ffffff;letter-spacing:0.295px;">nodes.py</div>
<svg class="ab" style="left:404px;top:50.6px" width="16" height="16" viewBox="-8 -8 16 16" stroke="#e0e0e0" stroke-width="1.3"><path d="M-4.6 -4.6L4.6 4.6M4.6 -4.6L-4.6 4.6"/></svg>
<svg class="ab" style="left:1640px;top:47px" width="140" height="24" viewBox="1640 47 140 24" fill="none" stroke="#cccccc" stroke-width="1.3" stroke-linejoin="round"><path d="M1650 52V66.4L1661.6 59.2Z"/><path d="M1671.4 57.4L1675.2 61.2L1679 57.4" stroke-width="1.1"/><rect x="1727" y="51.6" width="15" height="14" rx="1.2"/><path d="M1734.5 51.6V65.6"/><g fill="#cccccc" stroke="none"><circle cx="1759.4" cy="59" r="1.25"/><circle cx="1765.4" cy="59" r="1.25"/><circle cx="1771.4" cy="59" r="1.25"/></g><path fill="#cccccc" d="M1703 50.8Q1703.984 58.016 1711.2 59Q1703.984 59.984 1703 67.2Q1702.016 59.984 1694.8 59Q1702.016 58.016 1703 50.8Z"/></svg>
<div class="t" style="left:305.6px;top:84.2px;font-size:16px;color:#a9a9a9;letter-spacing:0.417px;">wrapper-project</div>
<div class="t" style="left:442.4px;top:84.2px;font-size:16px;color:#a9a9a9;letter-spacing:-0.172px;">test1</div>
<div class="t" style="left:496.4px;top:84.2px;font-size:16px;color:#a9a9a9;letter-spacing:0.336px;">src</div>
<div class="t" style="left:538.4px;top:84.2px;font-size:16px;color:#a9a9a9;letter-spacing:-0.172px;">test1</div>
<div class="t" style="left:592.2px;top:84.2px;font-size:16px;color:#a9a9a9;letter-spacing:0.230px;">pipelines</div>
<div class="t" style="left:676.2px;top:84.2px;font-size:16px;color:#a9a9a9;letter-spacing:0.355px;">reporting</div>
<svg class="ab" style="left:424.6px;top:85.5px" width="16" height="16" viewBox="-8 -8 16 16"><path d="M-2.8 -5.6L2.8 0L-2.8 5.6" fill="none" stroke="#a9a9a9" stroke-width="1.2"/></svg>
<svg class="ab" style="left:478.6px;top:85.5px" width="16" height="16" viewBox="-8 -8 16 16"><path d="M-2.8 -5.6L2.8 0L-2.8 5.6" fill="none" stroke="#a9a9a9" stroke-width="1.2"/></svg>
<svg class="ab" style="left:520.6px;top:85.5px" width="16" height="16" viewBox="-8 -8 16 16"><path d="M-2.8 -5.6L2.8 0L-2.8 5.6" fill="none" stroke="#a9a9a9" stroke-width="1.2"/></svg>
<svg class="ab" style="left:574.6px;top:85.5px" width="16" height="16" viewBox="-8 -8 16 16"><path d="M-2.8 -5.6L2.8 0L-2.8 5.6" fill="none" stroke="#a9a9a9" stroke-width="1.2"/></svg>
<svg class="ab" style="left:658.4px;top:85.5px" width="16" height="16" viewBox="-8 -8 16 16"><path d="M-2.8 -5.6L2.8 0L-2.8 5.6" fill="none" stroke="#a9a9a9" stroke-width="1.2"/></svg>
<svg class="ab" style="left:744.4px;top:85.5px" width="16" height="16" viewBox="-8 -8 16 16"><path d="M-2.8 -5.6L2.8 0L-2.8 5.6" fill="none" stroke="#a9a9a9" stroke-width="1.2"/></svg>
<svg class="ab" style="left:857.4px;top:85.5px" width="16" height="16" viewBox="-8 -8 16 16"><path d="M-2.8 -5.6L2.8 0L-2.8 5.6" fill="none" stroke="#a9a9a9" stroke-width="1.2"/></svg>
<svg class="ab" style="left:767.6px;top:86.5px" width="12.8" height="12.8" viewBox="0 0 24 24"><path fill="#4b9fca" d="M14.25.18l.9.2.73.26.59.3.45.32.34.34.25.34.16.33.1.3.04.26.02.2-.01.13V8.5l-.05.63-.13.55-.21.46-.26.38-.3.31-.33.25-.35.19-.35.14-.33.1-.3.07-.26.04-.21.02H8.77l-.69.05-.59.14-.5.22-.41.27-.33.32-.27.35-.2.36-.15.37-.1.35-.07.32-.04.27-.02.21v3.06H3.17l-.21-.03-.28-.07-.32-.12-.35-.18-.36-.26-.36-.36-.35-.46-.32-.59-.28-.73-.21-.88-.14-1.05-.05-1.23.06-1.22.16-1.04.24-.87.32-.71.36-.57.4-.44.42-.33.42-.24.4-.16.36-.1.32-.05.24-.01h.16l.06.01h8.16v-.83H6.18l-.01-2.75-.02-.37.05-.34.11-.31.17-.28.25-.26.31-.23.38-.2.44-.18.51-.15.58-.12.64-.1.71-.06.77-.04.84-.02 1.27.05zm-6.3 1.98l-.23.33-.08.41.08.41.23.34.33.22.41.09.41-.09.33-.22.23-.34.08-.41-.08-.41-.23-.33-.33-.22-.41-.09-.41.09zm13.09 3.95l.28.06.32.12.35.18.36.27.36.35.35.47.32.59.28.73.21.88.14 1.04.05 1.23-.06 1.23-.16 1.04-.24.86-.32.71-.36.57-.4.45-.42.33-.42.24-.4.16-.36.09-.32.05-.24.02-.16-.01h-8.22v.82h5.84l.01 2.76.02.36-.05.34-.11.31-.17.29-.25.25-.31.24-.38.2-.44.17-.51.15-.58.13-.64.09-.71.07-.77.04-.84.01-1.27-.04-1.07-.14-.9-.2-.73-.25-.59-.3-.45-.33-.34-.34-.25-.34-.16-.33-.1-.3-.04-.25-.02-.2.01-.13v-5.34l.05-.64.13-.54.21-.46.26-.38.3-.32.33-.24.35-.2.35-.14.33-.1.3-.06.26-.04.21-.02.13-.01h5.84l.69-.05.59-.14.5-.21.41-.28.33-.32.27-.35.2-.36.15-.36.1-.35.07-.32.04-.28.02-.21V6.07h2.09l.14.01zm-6.47 14.25l-.23.33-.08.41.08.41.23.33.33.23.41.08.41-.08.33-.23.23-.33.08-.41-.08-.41-.23-.33-.33-.23-.41-.08-.41.08z"/></svg>
<div class="t" style="left:788px;top:84.2px;font-size:16px;color:#a9a9a9;letter-spacing:0.152px;">nodes.py</div>
<div class="t" style="left:875px;top:85.3px;font-size:12.5px;color:#a9a9a9;">…</div>
<div class="ab" style="left:365px;top:430.1px;width:1293px;height:21.9px;border:2px solid #282828;box-sizing:border-box"></div>
<div class="ab" style="left:1775.5px;top:106px;width:9.5px;height:395px;background:#4a4a4a"></div>
<div class="ab" style="left:1775.5px;top:255px;width:9.5px;height:1.5px;background:#7a7a7a"></div>
<svg class="ab" style="left:1655px;top:100px" width="122" height="120" viewBox="1655 100 122 120"><rect x="1661" y="180.6" width="114.5" height="2.2" fill="#27578f"/><rect x="1661" y="184.5" width="114.5" height="2.1" fill="#27578f"/><rect x="1661" y="188.4" width="114.5" height="4.1" fill="#27578f"/><rect x="1661" y="194.4" width="114.5" height="2.2" fill="#27578f"/><rect x="1665" y="180.6" width="7.599999999999909" height="1.8" fill="#2f7fd4"/><rect x="1685" y="184.6" width="8" height="1.8" fill="#2f7fd4"/><rect x="1688" y="188.6" width="7.5" height="1.8" fill="#2f7fd4"/><rect x="1704.5" y="190.6" width="8.0" height="1.8" fill="#2f7fd4"/><rect x="1725" y="190.6" width="8" height="1.8" fill="#2f7fd4"/><rect x="1694" y="194.6" width="6" height="1.8" fill="#2f7fd4"/><rect x="1661.4" y="106.8" width="6.0" height="1.3" fill="#c586c0" opacity="0.5"/>
<rect x="1668.4" y="106.8" width="9.9" height="1.3" fill="#4ec9b0" opacity="0.5"/>
<rect x="1678.3" y="106.8" width="1.0" height="1.3" fill="#d4d4d4" opacity="0.5"/>
<rect x="1679.3" y="106.8" width="6.0" height="1.3" fill="#4ec9b0" opacity="0.5"/>
<rect x="1686.2" y="106.8" width="2.0" height="1.3" fill="#c586c0" opacity="0.5"/>
<rect x="1689.2" y="106.8" width="3.0" height="1.3" fill="#4ec9b0" opacity="0.5"/>
<rect x="1661.4" y="108.8" width="6.0" height="1.3" fill="#c586c0" opacity="0.5"/>
<rect x="1668.4" y="108.8" width="6.0" height="1.3" fill="#4ec9b0" opacity="0.5"/>
<rect x="1675.3" y="108.8" width="2.0" height="1.3" fill="#c586c0" opacity="0.5"/>
<rect x="1678.3" y="108.8" width="2.0" height="1.3" fill="#4ec9b0" opacity="0.5"/>
<rect x="1661.4" y="110.8" width="6.0" height="1.3" fill="#c586c0" opacity="0.5"/>
<rect x="1668.4" y="110.8" width="6.0" height="1.3" fill="#4ec9b0" opacity="0.5"/>
<rect x="1674.3" y="110.8" width="1.0" height="1.3" fill="#d4d4d4" opacity="0.5"/>
<rect x="1675.3" y="110.8" width="7.0" height="1.3" fill="#4ec9b0" opacity="0.5"/>
<rect x="1683.3" y="110.8" width="2.0" height="1.3" fill="#c586c0" opacity="0.5"/>
<rect x="1686.2" y="110.8" width="2.0" height="1.3" fill="#4ec9b0" opacity="0.3"/>
<rect x="1690.2" y="110.8" width="1.0" height="1.3" fill="#6a9955" opacity="0.5"/>
<rect x="1692.2" y="110.8" width="5.0" height="1.3" fill="#6a9955" opacity="0.5"/>
<rect x="1699.2" y="110.8" width="4.0" height="1.3" fill="#6a9955" opacity="0.5"/>
<rect x="1661.4" y="112.8" width="6.0" height="1.3" fill="#c586c0" opacity="0.5"/>
<rect x="1668.4" y="112.8" width="6.0" height="1.3" fill="#4ec9b0" opacity="0.5"/>
<rect x="1674.3" y="112.8" width="1.0" height="1.3" fill="#d4d4d4" opacity="0.5"/>
<rect x="1675.3" y="112.8" width="9.9" height="1.3" fill="#4ec9b0" opacity="0.5"/>
<rect x="1686.2" y="112.8" width="2.0" height="1.3" fill="#c586c0" opacity="0.5"/>
<rect x="1689.2" y="112.8" width="2.0" height="1.3" fill="#4ec9b0" opacity="0.5"/>
<rect x="1661.4" y="114.8" width="6.0" height="1.3" fill="#c586c0" opacity="0.5"/>
<rect x="1668.4" y="114.8" width="7.0" height="1.3" fill="#4ec9b0" opacity="0.5"/>
<rect x="1676.3" y="114.8" width="2.0" height="1.3" fill="#c586c0" opacity="0.5"/>
<rect x="1679.3" y="114.8" width="2.0" height="1.3" fill="#4ec9b0" opacity="0.5"/>
<rect x="1661.4" y="120.8" width="1.0" height="1.3" fill="#6a9955" opacity="0.5"/>
<rect x="1663.4" y="120.8" width="4.0" height="1.3" fill="#6a9955" opacity="0.5"/>
<rect x="1668.4" y="120.8" width="8.0" height="1.3" fill="#6a9955" opacity="0.5"/>
<rect x="1677.3" y="120.8" width="4.0" height="1.3" fill="#6a9955" opacity="0.5"/>
<rect x="1682.3" y="120.8" width="13.9" height="1.3" fill="#6a9955" opacity="0.5"/>
<rect x="1661.4" y="122.8" width="3.0" height="1.3" fill="#569cd6" opacity="0.5"/>
<rect x="1665.4" y="122.8" width="29.8" height="1.3" fill="#dcdcaa" opacity="0.5"/>
<rect x="1695.2" y="122.8" width="1.0" height="1.3" fill="#ffd700" opacity="0.5"/>
<rect x="1696.2" y="122.8" width="20.9" height="1.3" fill="#9cdcfe" opacity="0.5"/>
<rect x="1717.1" y="122.8" width="1.0" height="1.3" fill="#d4d4d4" opacity="0.5"/>
<rect x="1719.1" y="122.8" width="2.0" height="1.3" fill="#4ec9b0" opacity="0.5"/>
<rect x="1721.0" y="122.8" width="1.0" height="1.3" fill="#d4d4d4" opacity="0.5"/>
<rect x="1722.0" y="122.8" width="8.9" height="1.3" fill="#4ec9b0" opacity="0.5"/>
<rect x="1731.0" y="122.8" width="1.0" height="1.3" fill="#ffd700" opacity="0.5"/>
<rect x="1732.0" y="122.8" width="1.0" height="1.3" fill="#d4d4d4" opacity="0.5"/>
<rect x="1665.4" y="124.8" width="6.0" height="1.3" fill="#c586c0" opacity="0.5"/>
<rect x="1672.3" y="124.8" width="1.0" height="1.3" fill="#ffd700" opacity="0.5"/>
<rect x="1669.4" y="126.8" width="20.9" height="1.3" fill="#9cdcfe" opacity="0.5"/>
<rect x="1690.2" y="126.8" width="1.0" height="1.3" fill="#d4d4d4" opacity="0.5"/>
<rect x="1691.2" y="126.8" width="7.0" height="1.3" fill="#dcdcaa" opacity="0.5"/>
<rect x="1698.2" y="126.8" width="1.0" height="1.3" fill="#da70d6" opacity="0.5"/>
<rect x="1699.2" y="126.8" width="1.0" height="1.3" fill="#179fff" opacity="0.5"/>
<rect x="1700.2" y="126.8" width="13.9" height="1.3" fill="#ce9178" opacity="0.5"/>
<rect x="1714.1" y="126.8" width="1.0" height="1.3" fill="#179fff" opacity="0.5"/>
<rect x="1715.1" y="126.8" width="1.0" height="1.3" fill="#da70d6" opacity="0.5"/>
<rect x="1669.4" y="128.8" width="1.0" height="1.3" fill="#d4d4d4" opacity="0.5"/>
<rect x="1670.3" y="128.8" width="4.0" height="1.3" fill="#dcdcaa" opacity="0.5"/>
<rect x="1674.3" y="128.8" width="1.0" height="1.3" fill="#da70d6" opacity="0.5"/>
<rect x="1675.3" y="128.8" width="11.9" height="1.3" fill="#9cdcfe" opacity="0.5"/>
<rect x="1687.2" y="128.8" width="1.0" height="1.3" fill="#d4d4d4" opacity="0.5"/>
<rect x="1688.2" y="128.8" width="4.0" height="1.3" fill="#569cd6" opacity="0.5"/>
<rect x="1692.2" y="128.8" width="1.0" height="1.3" fill="#da70d6" opacity="0.5"/>
<rect x="1669.4" y="130.8" width="1.0" height="1.3" fill="#d4d4d4" opacity="0.5"/>
<rect x="1670.3" y="130.8" width="10.9" height="1.3" fill="#dcdcaa" opacity="0.5"/>
<rect x="1681.3" y="130.8" width="1.0" height="1.3" fill="#da70d6" opacity="0.5"/>
<rect x="1682.3" y="130.8" width="1.0" height="1.3" fill="#da70d6" opacity="0.5"/>
<rect x="1665.4" y="132.8" width="1.0" height="1.3" fill="#ffd700" opacity="0.5"/>
<rect x="1661.4" y="138.8" width="1.0" height="1.3" fill="#6a9955" opacity="0.5"/>
<rect x="1663.4" y="138.8" width="4.0" height="1.3" fill="#6a9955" opacity="0.5"/>
<rect x="1668.4" y="138.8" width="8.0" height="1.3" fill="#6a9955" opacity="0.5"/>
<rect x="1677.3" y="138.8" width="4.0" height="1.3" fill="#6a9955" opacity="0.5"/>
<rect x="1682.3" y="138.8" width="19.9" height="1.3" fill="#6a9955" opacity="0.5"/>
<rect x="1661.4" y="140.8" width="3.0" height="1.3" fill="#569cd6" opacity="0.5"/>
<rect x="1665.4" y="140.8" width="28.8" height="1.3" fill="#dcdcaa" opacity="0.5"/>
<rect x="1694.2" y="140.8" width="1.0" height="1.3" fill="#ffd700" opacity="0.5"/>
<rect x="1695.2" y="140.8" width="20.9" height="1.3" fill="#9cdcfe" opacity="0.5"/>
<rect x="1716.1" y="140.8" width="1.0" height="1.3" fill="#d4d4d4" opacity="0.5"/>
<rect x="1718.1" y="140.8" width="2.0" height="1.3" fill="#4ec9b0" opacity="0.5"/>
<rect x="1720.0" y="140.8" width="1.0" height="1.3" fill="#d4d4d4" opacity="0.5"/>
<rect x="1721.0" y="140.8" width="8.9" height="1.3" fill="#4ec9b0" opacity="0.5"/>
<rect x="1730.0" y="140.8" width="1.0" height="1.3" fill="#ffd700" opacity="0.5"/>
<rect x="1731.0" y="140.8" width="1.0" height="1.3" fill="#d4d4d4" opacity="0.5"/>
<rect x="1665.4" y="144.8" width="9.9" height="1.3" fill="#9cdcfe" opacity="0.5"/>
<rect x="1676.3" y="144.8" width="1.0" height="1.3" fill="#d4d4d4" opacity="0.5"/>
<rect x="1678.3" y="144.8" width="1.0" height="1.3" fill="#ffd700" opacity="0.5"/>
<rect x="1669.4" y="146.8" width="20.9" height="1.3" fill="#9cdcfe" opacity="0.5"/>
<rect x="1690.2" y="146.8" width="1.0" height="1.3" fill="#d4d4d4" opacity="0.5"/>
<rect x="1691.2" y="146.8" width="7.0" height="1.3" fill="#dcdcaa" opacity="0.5"/>
<rect x="1698.2" y="146.8" width="1.0" height="1.3" fill="#da70d6" opacity="0.5"/>
<rect x="1699.2" y="146.8" width="1.0" height="1.3" fill="#179fff" opacity="0.5"/>
<rect x="1700.2" y="146.8" width="13.9" height="1.3" fill="#ce9178" opacity="0.5"/>
<rect x="1714.1" y="146.8" width="1.0" height="1.3" fill="#179fff" opacity="0.5"/>
<rect x="1715.1" y="146.8" width="1.0" height="1.3" fill="#da70d6" opacity="0.5"/>
<rect x="1669.4" y="148.8" width="1.0" height="1.3" fill="#d4d4d4" opacity="0.5"/>
<rect x="1670.3" y="148.8" width="4.0" height="1.3" fill="#dcdcaa" opacity="0.5"/>
<rect x="1674.3" y="148.8" width="1.0" height="1.3" fill="#da70d6" opacity="0.5"/>
<rect x="1675.3" y="148.8" width="11.9" height="1.3" fill="#9cdcfe" opacity="0.5"/>
<rect x="1687.2" y="148.8" width="1.0" height="1.3" fill="#d4d4d4" opacity="0.5"/>
<rect x="1688.2" y="148.8" width="4.0" height="1.3" fill="#569cd6" opacity="0.5"/>
<rect x="1692.2" y="148.8" width="1.0" height="1.3" fill="#da70d6" opacity="0.5"/>
<rect x="1669.4" y="150.8" width="1.0" height="1.3" fill="#d4d4d4" opacity="0.5"/>
<rect x="1670.3" y="150.8" width="10.9" height="1.3" fill="#dcdcaa" opacity="0.5"/>
<rect x="1681.3" y="150.8" width="1.0" height="1.3" fill="#da70d6" opacity="0.5"/>
<rect x="1682.3" y="150.8" width="1.0" height="1.3" fill="#da70d6" opacity="0.5"/>
<rect x="1665.4" y="152.8" width="1.0" height="1.3" fill="#ffd700" opacity="0.5"/>
<rect x="1665.4" y="154.8" width="3.0" height="1.3" fill="#9cdcfe" opacity="0.5"/>
<rect x="1669.4" y="154.8" width="1.0" height="1.3" fill="#d4d4d4" opacity="0.5"/>
<rect x="1671.3" y="154.8" width="2.0" height="1.3" fill="#4ec9b0" opacity="0.5"/>
<rect x="1673.3" y="154.8" width="1.0" height="1.3" fill="#d4d4d4" opacity="0.5"/>
<rect x="1674.3" y="154.8" width="6.0" height="1.3" fill="#4ec9b0" opacity="0.5"/>
<rect x="1680.3" y="154.8" width="1.0" height="1.3" fill="#ffd700" opacity="0.5"/>
<rect x="1669.4" y="156.8" width="1.0" height="1.3" fill="#da70d6" opacity="0.5"/>
<rect x="1673.3" y="158.8" width="2.0" height="1.3" fill="#4ec9b0" opacity="0.5"/>
<rect x="1675.3" y="158.8" width="1.0" height="1.3" fill="#d4d4d4" opacity="0.5"/>
<rect x="1676.3" y="158.8" width="3.0" height="1.3" fill="#4ec9b0" opacity="0.5"/>
<rect x="1679.3" y="158.8" width="1.0" height="1.3" fill="#179fff" opacity="0.5"/>
<rect x="1677.3" y="160.8" width="1.0" height="1.3" fill="#9cdcfe" opacity="0.5"/>
<rect x="1678.3" y="160.8" width="1.0" height="1.3" fill="#d4d4d4" opacity="0.5"/>
<rect x="1679.3" y="160.8" width="9.9" height="1.3" fill="#9cdcfe" opacity="0.5"/>
<rect x="1689.2" y="160.8" width="1.0" height="1.3" fill="#ffd700" opacity="0.5"/>
<rect x="1690.2" y="160.8" width="13.9" height="1.3" fill="#ce9178" opacity="0.5"/>
<rect x="1704.1" y="160.8" width="1.0" height="1.3" fill="#ffd700" opacity="0.5"/>
<rect x="1705.1" y="160.8" width="1.0" height="1.3" fill="#d4d4d4" opacity="0.5"/>
<rect x="1677.3" y="162.8" width="1.0" height="1.3" fill="#9cdcfe" opacity="0.5"/>
<rect x="1678.3" y="162.8" width="1.0" height="1.3" fill="#d4d4d4" opacity="0.5"/>
<rect x="1679.3" y="162.8" width="9.9" height="1.3" fill="#9cdcfe" opacity="0.5"/>
<rect x="1689.2" y="162.8" width="1.0" height="1.3" fill="#ffd700" opacity="0.5"/>
<rect x="1690.2" y="162.8" width="19.9" height="1.3" fill="#ce9178" opacity="0.5"/>
<rect x="1710.1" y="162.8" width="1.0" height="1.3" fill="#ffd700" opacity="0.5"/>
<rect x="1711.1" y="162.8" width="1.0" height="1.3" fill="#d4d4d4" opacity="0.5"/>
<rect x="1673.3" y="164.8" width="1.0" height="1.3" fill="#179fff" opacity="0.5"/>
<rect x="1669.4" y="166.8" width="1.0" height="1.3" fill="#da70d6" opacity="0.5"/>
<rect x="1665.4" y="168.8" width="1.0" height="1.3" fill="#ffd700" opacity="0.5"/>
<rect x="1665.4" y="172.8" width="6.0" height="1.3" fill="#c586c0" opacity="0.5"/>
<rect x="1672.3" y="172.8" width="3.0" height="1.3" fill="#9cdcfe" opacity="0.5"/>
<rect x="1661.4" y="178.8" width="3.0" height="1.3" fill="#569cd6" opacity="0.5"/>
<rect x="1665.4" y="178.8" width="22.9" height="1.3" fill="#dcdcaa" opacity="0.5"/>
<rect x="1688.2" y="178.8" width="1.0" height="1.3" fill="#ffd700" opacity="0.5"/>
<rect x="1689.2" y="178.8" width="8.9" height="1.3" fill="#9cdcfe" opacity="0.3"/>
<rect x="1698.2" y="178.8" width="1.0" height="1.3" fill="#d4d4d4" opacity="0.5"/>
<rect x="1700.2" y="178.8" width="2.0" height="1.3" fill="#4ec9b0" opacity="0.5"/>
<rect x="1702.2" y="178.8" width="1.0" height="1.3" fill="#d4d4d4" opacity="0.5"/>
<rect x="1703.1" y="178.8" width="8.9" height="1.3" fill="#4ec9b0" opacity="0.5"/>
<rect x="1712.1" y="178.8" width="1.0" height="1.3" fill="#ffd700" opacity="0.5"/>
<rect x="1713.1" y="178.8" width="1.0" height="1.3" fill="#d4d4d4" opacity="0.5"/>
<rect x="1665.4" y="180.8" width="7.0" height="1.3" fill="#9cdcfe" opacity="0.5"/>
<rect x="1673.3" y="180.8" width="1.0" height="1.3" fill="#d4d4d4" opacity="0.5"/>
<rect x="1675.3" y="180.8" width="1.0" height="1.3" fill="#ffd700" opacity="0.5"/>
<rect x="1676.3" y="180.8" width="1.0" height="1.3" fill="#b5cea8" opacity="0.5"/>
<rect x="1677.3" y="180.8" width="1.0" height="1.3" fill="#d4d4d4" opacity="0.5"/>
<rect x="1679.3" y="180.8" width="1.0" height="1.3" fill="#b5cea8" opacity="0.5"/>
<rect x="1680.3" y="180.8" width="1.0" height="1.3" fill="#d4d4d4" opacity="0.5"/>
<rect x="1682.3" y="180.8" width="1.0" height="1.3" fill="#b5cea8" opacity="0.5"/>
<rect x="1683.3" y="180.8" width="1.0" height="1.3" fill="#d4d4d4" opacity="0.5"/>
<rect x="1685.3" y="180.8" width="1.0" height="1.3" fill="#b5cea8" opacity="0.5"/>
<rect x="1686.2" y="180.8" width="1.0" height="1.3" fill="#d4d4d4" opacity="0.5"/>
<rect x="1688.2" y="180.8" width="1.0" height="1.3" fill="#b5cea8" opacity="0.5"/>
<rect x="1689.2" y="180.8" width="1.0" height="1.3" fill="#d4d4d4" opacity="0.5"/>
<rect x="1691.2" y="180.8" width="1.0" height="1.3" fill="#b5cea8" opacity="0.5"/>
<rect x="1692.2" y="180.8" width="1.0" height="1.3" fill="#d4d4d4" opacity="0.5"/>
<rect x="1694.2" y="180.8" width="1.0" height="1.3" fill="#b5cea8" opacity="0.5"/>
<rect x="1695.2" y="180.8" width="1.0" height="1.3" fill="#d4d4d4" opacity="0.5"/>
<rect x="1697.2" y="180.8" width="1.0" height="1.3" fill="#b5cea8" opacity="0.5"/>
<rect x="1698.2" y="180.8" width="1.0" height="1.3" fill="#d4d4d4" opacity="0.5"/>
<rect x="1700.2" y="180.8" width="1.0" height="1.3" fill="#b5cea8" opacity="0.5"/>
<rect x="1701.2" y="180.8" width="1.0" height="1.3" fill="#d4d4d4" opacity="0.5"/>
<rect x="1703.1" y="180.8" width="1.0" height="1.3" fill="#b5cea8" opacity="0.5"/>
<rect x="1704.1" y="180.8" width="1.0" height="1.3" fill="#d4d4d4" opacity="0.5"/>
<rect x="1706.1" y="180.8" width="1.0" height="1.3" fill="#b5cea8" opacity="0.5"/>
<rect x="1707.1" y="180.8" width="1.0" height="1.3" fill="#ffd700" opacity="0.5"/>
<rect x="1665.4" y="182.8" width="8.9" height="1.3" fill="#9cdcfe" opacity="0.5"/>
<rect x="1675.3" y="182.8" width="1.0" height="1.3" fill="#d4d4d4" opacity="0.5"/>
<rect x="1677.3" y="182.8" width="1.0" height="1.3" fill="#ffd700" opacity="0.5"/>
<rect x="1678.3" y="182.8" width="1.0" height="1.3" fill="#b5cea8" opacity="0.5"/>
<rect x="1679.3" y="182.8" width="1.0" height="1.3" fill="#d4d4d4" opacity="0.5"/>
<rect x="1681.3" y="182.8" width="1.0" height="1.3" fill="#b5cea8" opacity="0.5"/>
<rect x="1682.3" y="182.8" width="1.0" height="1.3" fill="#d4d4d4" opacity="0.5"/>
<rect x="1684.3" y="182.8" width="1.0" height="1.3" fill="#b5cea8" opacity="0.5"/>
<rect x="1685.3" y="182.8" width="1.0" height="1.3" fill="#d4d4d4" opacity="0.5"/>
<rect x="1687.2" y="182.8" width="1.0" height="1.3" fill="#b5cea8" opacity="0.5"/>
<rect x="1688.2" y="182.8" width="1.0" height="1.3" fill="#d4d4d4" opacity="0.5"/>
<rect x="1690.2" y="182.8" width="1.0" height="1.3" fill="#b5cea8" opacity="0.5"/>
<rect x="1691.2" y="182.8" width="1.0" height="1.3" fill="#d4d4d4" opacity="0.5"/>
<rect x="1693.2" y="182.8" width="1.0" height="1.3" fill="#b5cea8" opacity="0.5"/>
<rect x="1694.2" y="182.8" width="1.0" height="1.3" fill="#d4d4d4" opacity="0.5"/>
<rect x="1696.2" y="182.8" width="1.0" height="1.3" fill="#b5cea8" opacity="0.5"/>
<rect x="1697.2" y="182.8" width="1.0" height="1.3" fill="#d4d4d4" opacity="0.5"/>
<rect x="1699.2" y="182.8" width="1.0" height="1.3" fill="#b5cea8" opacity="0.5"/>
<rect x="1700.2" y="182.8" width="1.0" height="1.3" fill="#d4d4d4" opacity="0.5"/>
<rect x="1702.2" y="182.8" width="1.0" height="1.3" fill="#b5cea8" opacity="0.5"/>
<rect x="1703.1" y="182.8" width="1.0" height="1.3" fill="#d4d4d4" opacity="0.5"/>
<rect x="1705.1" y="182.8" width="1.0" height="1.3" fill="#b5cea8" opacity="0.5"/>
<rect x="1706.1" y="182.8" width="1.0" height="1.3" fill="#d4d4d4" opacity="0.5"/>
<rect x="1708.1" y="182.8" width="1.0" height="1.3" fill="#b5cea8" opacity="0.5"/>
<rect x="1709.1" y="182.8" width="1.0" height="1.3" fill="#ffd700" opacity="0.5"/>
<rect x="1665.4" y="184.8" width="4.0" height="1.3" fill="#9cdcfe" opacity="0.5"/>
<rect x="1670.3" y="184.8" width="1.0" height="1.3" fill="#d4d4d4" opacity="0.5"/>
<rect x="1672.3" y="184.8" width="1.0" height="1.3" fill="#ffd700" opacity="0.5"/>
<rect x="1673.3" y="184.8" width="9.9" height="1.3" fill="#ce9178" opacity="0.5"/>
<rect x="1683.3" y="184.8" width="1.0" height="1.3" fill="#d4d4d4" opacity="0.5"/>
<rect x="1685.3" y="184.8" width="7.0" height="1.3" fill="#9cdcfe" opacity="0.5"/>
<rect x="1692.2" y="184.8" width="1.0" height="1.3" fill="#d4d4d4" opacity="0.5"/>
<rect x="1694.2" y="184.8" width="12.9" height="1.3" fill="#ce9178" opacity="0.5"/>
<rect x="1707.1" y="184.8" width="1.0" height="1.3" fill="#d4d4d4" opacity="0.5"/>
<rect x="1709.1" y="184.8" width="8.9" height="1.3" fill="#9cdcfe" opacity="0.5"/>
<rect x="1718.1" y="184.8" width="1.0" height="1.3" fill="#ffd700" opacity="0.5"/>
<rect x="1665.4" y="186.8" width="2.0" height="1.3" fill="#9cdcfe" opacity="0.5"/>
<rect x="1668.4" y="186.8" width="1.0" height="1.3" fill="#d4d4d4" opacity="0.5"/>
<rect x="1670.3" y="186.8" width="2.0" height="1.3" fill="#4ec9b0" opacity="0.5"/>
<rect x="1672.3" y="186.8" width="9.9" height="1.3" fill="#4ec9b0" opacity="0.5"/>
<rect x="1682.3" y="186.8" width="1.0" height="1.3" fill="#ffd700" opacity="0.5"/>
<rect x="1683.3" y="186.8" width="4.0" height="1.3" fill="#9cdcfe" opacity="0.5"/>
<rect x="1687.2" y="186.8" width="1.0" height="1.3" fill="#d4d4d4" opacity="0.5"/>
<rect x="1689.2" y="186.8" width="7.0" height="1.3" fill="#9cdcfe" opacity="0.5"/>
<rect x="1696.2" y="186.8" width="1.0" height="1.3" fill="#d4d4d4" opacity="0.5"/>
<rect x="1697.2" y="186.8" width="11.9" height="1.3" fill="#ce9178" opacity="0.5"/>
<rect x="1710.1" y="186.8" width="13.9" height="1.3" fill="#ce9178" opacity="0.5"/>
<rect x="1724.0" y="186.8" width="1.0" height="1.3" fill="#ffd700" opacity="0.5"/>
<rect x="1665.4" y="188.8" width="15.9" height="1.3" fill="#9cdcfe" opacity="0.5"/>
<rect x="1682.3" y="188.8" width="1.0" height="1.3" fill="#d4d4d4" opacity="0.5"/>
<rect x="1684.3" y="188.8" width="2.0" height="1.3" fill="#4ec9b0" opacity="0.5"/>
<rect x="1686.2" y="188.8" width="8.9" height="1.3" fill="#d4d4d4" opacity="0.5"/>
<rect x="1695.2" y="188.8" width="1.0" height="1.3" fill="#ffd700" opacity="0.5"/>
<rect x="1669.4" y="190.8" width="2.0" height="1.3" fill="#9cdcfe" opacity="0.5"/>
<rect x="1671.3" y="190.8" width="12.9" height="1.3" fill="#ce9178" opacity="0.5"/>
<rect x="1685.3" y="190.8" width="2.0" height="1.3" fill="#9cdcfe" opacity="0.5"/>
<rect x="1687.2" y="190.8" width="15.9" height="1.3" fill="#ce9178" opacity="0.5"/>
<rect x="1704.1" y="190.8" width="8.0" height="1.3" fill="#9cdcfe" opacity="0.5"/>
<rect x="1712.1" y="190.8" width="1.0" height="1.3" fill="#d4d4d4" opacity="0.5"/>
<rect x="1713.1" y="190.8" width="10.9" height="1.3" fill="#ce9178" opacity="0.5"/>
<rect x="1725.0" y="190.8" width="8.0" height="1.3" fill="#9cdcfe" opacity="0.5"/>
<rect x="1733.0" y="190.8" width="1.0" height="1.3" fill="#d4d4d4" opacity="0.5"/>
<rect x="1734.0" y="190.8" width="12.9" height="1.3" fill="#ce9178" opacity="0.5"/>
<rect x="1665.4" y="192.8" width="1.0" height="1.3" fill="#ffd700" opacity="0.5"/>
<rect x="1665.4" y="194.8" width="2.0" height="1.3" fill="#4ec9b0" opacity="0.5"/>
<rect x="1667.4" y="194.8" width="8.0" height="1.3" fill="#d4d4d4" opacity="0.5"/>
<rect x="1675.3" y="194.8" width="1.0" height="1.3" fill="#ffd700" opacity="0.5"/>
<rect x="1676.3" y="194.8" width="16.9" height="1.3" fill="#9cdcfe" opacity="0.5"/>
<rect x="1694.2" y="194.8" width="5.0" height="1.3" fill="#9cdcfe" opacity="0.5"/>
<rect x="1699.2" y="194.8" width="1.0" height="1.3" fill="#d4d4d4" opacity="0.5"/>
<rect x="1700.2" y="194.8" width="4.0" height="1.3" fill="#569cd6" opacity="0.5"/>
<rect x="1704.1" y="194.8" width="1.0" height="1.3" fill="#ffd700" opacity="0.5"/>
<rect x="1665.4" y="196.8" width="6.0" height="1.3" fill="#c586c0" opacity="0.5"/>
<rect x="1672.3" y="196.8" width="3.0" height="1.3" fill="#4ec9b0" opacity="0.5"/></svg>
<svg class="ab" style="left:1022px;top:434px" width="20" height="28" viewBox="1022 434 20 28" fill="none" stroke-linecap="round" stroke-linejoin="round"><path d="M1028.3 440.4Q1030.6 440.2 1031.6 441.6Q1032.6 440.2 1034.9 440.4M1031.6 441.6V454.6M1028.3 455.8Q1030.6 456 1031.6 454.6Q1032.6 456 1034.9 455.8M1030.3 448.4H1032.9" stroke="#ffffff" stroke-width="3.3"/><path d="M1028.3 440.4Q1030.6 440.2 1031.6 441.6Q1032.6 440.2 1034.9 440.4M1031.6 441.6V454.6M1028.3 455.8Q1030.6 456 1031.6 454.6Q1032.6 456 1034.9 455.8M1030.3 448.4H1032.9" stroke="#111" stroke-width="1.0"/></svg>
<div id="code">
<div class="ln" style="top:106.8px">1</div>
<div class="cl" style="top:106.8px"><span class="k">import</span> <span class="c">matplotlib</span>.<span class="c">pyplot</span> <span class="k">as</span> <span class="c">plt</span></div>
<div class="ln" style="top:128.4px">2</div>
<div class="cl" style="top:128.4px"><span class="k">import</span> <span class="c">pandas</span> <span class="k">as</span> <span class="c">pd</span></div>
<div class="ln" style="top:150.0px">3</div>
<div class="cl" style="top:150.0px"><span class="k">import</span> <span class="c">plotly</span>.<span class="c">express</span> <span class="k">as</span> <span class="c dim">px</span><span class="m">  # noqa:  F401</span></div>
<div class="ln" style="top:171.6px">4</div>
<div class="cl" style="top:171.6px"><span class="k">import</span> <span class="c">plotly</span>.<span class="c">graph_objs</span> <span class="k">as</span> <span class="c">go</span></div>
<div class="ln" style="top:193.2px">5</div>
<div class="cl" style="top:193.2px"><span class="k">import</span> <span class="c">seaborn</span> <span class="k">as</span> <span class="c">sn</span></div>
<div class="ln" style="top:214.8px">6</div>
<div class="ln" style="top:236.4px">7</div>
<div class="ln" style="top:258.0px">8</div>
<div class="cl" style="top:258.0px"><span class="m"># This function uses plotly.express</span></div>
<div class="ln" style="top:279.6px">9</div>
<div class="cl" style="top:279.6px"><span class="d">def</span> <span class="f">compare_passenger_capacity_exp</span><span class="b1">(</span><span class="v">preprocessed_shuttles</span>: <span class="c">pd</span>.<span class="c">DataFrame</span><span class="b1">)</span>:</div>
<div class="ln" style="top:301.2px">10</div>
<div class="cl" style="top:301.2px">    <span class="k">return</span> <span class="b1">(</span></div>
<div class="ln" style="top:322.8px">11</div>
<div class="cl" style="top:322.8px">        <span class="v">preprocessed_shuttles</span>.<span class="f">groupby</span><span class="b2">(</span><span class="b3">[</span><span class="s">"shuttle_type"</span><span class="b3">]</span><span class="b2">)</span></div>
<div class="ln" style="top:344.4px">12</div>
<div class="cl" style="top:344.4px">        .<span class="f">mean</span><span class="b2">(</span><span class="v">numeric_only</span>=<span class="d">True</span><span class="b2">)</span></div>
<div class="ln" style="top:366.0px">13</div>
<div class="cl" style="top:366.0px">        .<span class="f">reset_index</span><span class="b2">(</span><span class="b2">)</span></div>
<div class="ln" style="top:387.6px">14</div>
<div class="cl" style="top:387.6px">    <span class="b1">)</span></div>
<div class="ln" style="top:409.2px">15</div>
<div class="ln cur" style="top:430.8px">16</div>
<div class="ln" style="top:452.4px">17</div>
<div class="cl" style="top:452.4px"><span class="m"># This function uses plotly.graph_objects</span></div>
<div class="ln" style="top:474.0px">18</div>
<div class="cl" style="top:474.0px"><span class="d">def</span> <span class="f">compare_passenger_capacity_go</span><span class="b1">(</span><span class="v">preprocessed_shuttles</span>: <span class="c">pd</span>.<span class="c">DataFrame</span><span class="b1">)</span>:</div>
<div class="ln" style="top:495.6px">19</div>
<div class="ln" style="top:517.2px">20</div>
<div class="cl" style="top:517.2px">    <span class="v">data_frame</span> = <span class="b1">(</span></div>
<div class="ln" style="top:538.8px">21</div>
<div class="cl" style="top:538.8px">        <span class="v">preprocessed_shuttles</span>.<span class="f">groupby</span><span class="b2">(</span><span class="b3">[</span><span class="s">"shuttle_type"</span><span class="b3">]</span><span class="b2">)</span></div>
<div class="ln" style="top:560.4px">22</div>
<div class="cl" style="top:560.4px">        .<span class="f">mean</span><span class="b2">(</span><span class="v">numeric_only</span>=<span class="d">True</span><span class="b2">)</span></div>
<div class="ln" style="top:582.0px">23</div>
<div class="cl" style="top:582.0px">        .<span class="f">reset_index</span><span class="b2">(</span><span class="b2">)</span></div>
<div class="ln" style="top:603.6px">24</div>
<div class="cl" style="top:603.6px">    <span class="b1">)</span></div>
<div class="ln" style="top:625.2px">25</div>
<div class="cl" style="top:625.2px">    <span class="v">fig</span> = <span class="c">go</span>.<span class="c">Figure</span><span class="b1">(</span></div>
<div class="ln" style="top:646.8px">26</div>
<div class="cl" style="top:646.8px">        <span class="b2">[</span></div>
<div class="ln" style="top:668.4px">27</div>
<div class="cl" style="top:668.4px">            <span class="c">go</span>.<span class="c">Bar</span><span class="b3">(</span></div>
<div class="ln" style="top:690.0px">28</div>
<div class="cl" style="top:690.0px">                <span class="v">x</span>=<span class="v">data_frame</span><span class="b1">[</span><span class="s">"shuttle_type"</span><span class="b1">]</span>,</div>
<div class="ln" style="top:711.6px">29</div>
<div class="cl" style="top:711.6px">                <span class="v">y</span>=<span class="v">data_frame</span><span class="b1">[</span><span class="s">"passenger_capacity"</span><span class="b1">]</span>,</div>
<div class="ln" style="top:733.2px">30</div>
<div class="cl" style="top:733.2px">            <span class="b3">)</span></div>
<div class="ln" style="top:754.8px">31</div>
<div class="cl" style="top:754.8px">        <span class="b2">]</span></div>
<div class="ln" style="top:776.4px">32</div>
<div class="cl" style="top:776.4px">    <span class="b1">)</span></div>
<div class="ln" style="top:798.0px">33</div>
<div class="ln" style="top:819.6px">34</div>
<div class="cl" style="top:819.6px">    <span class="k">return</span> <span class="v">fig</span></div>
<div class="ln" style="top:841.2px">35</div>
<div class="ln" style="top:862.8px">36</div>
<div class="ln" style="top:884.4px">37</div>
<div class="cl" style="top:884.4px"><span class="d">def</span> <span class="f">create_confusion_matrix</span><span class="b1">(</span><span class="v dim">companies</span>: <span class="c">pd</span>.<span class="c">DataFrame</span><span class="b1">)</span>:</div>
<div class="ln" style="top:906.0px">38</div>
<div class="cl" style="top:906.0px">    <span class="v sq">actuals</span> = <span class="b1">[</span><span class="n">0</span>, <span class="n">1</span>, <span class="n">0</span>, <span class="n">0</span>, <span class="n">1</span>, <span class="n">1</span>, <span class="n">1</span>, <span class="n">0</span>, <span class="n">1</span>, <span class="n">0</span>, <span class="n">1</span><span class="b1">]</span></div>
<div class="ln" style="top:927.6px">39</div>
<div class="cl" style="top:927.6px">    <span class="v">predicted</span> = <span class="b1">[</span><span class="n">1</span>, <span class="n">1</span>, <span class="n">0</span>, <span class="n">1</span>, <span class="n">0</span>, <span class="n">1</span>, <span class="n">0</span>, <span class="n">0</span>, <span class="n">0</span>, <span class="n">1</span>, <span class="n">1</span><span class="b1">]</span></div>
<div class="ln" style="top:949.2px">40</div>
<div class="cl" style="top:949.2px">    <span class="v">data</span> = <span class="b1">{</span><span class="s">"y_Actual"</span>: <span class="v">actuals</span>, <span class="s">"y_Predicted"</span>: <span class="v">predicted</span><span class="b1">}</span></div>
<div class="ig" style="left:365.0px;top:300.5px;height:108.0px"></div>
<div class="ig" style="left:399.7px;top:322.1px;height:64.8px"></div>
<div class="ig" style="left:365.0px;top:494.9px;height:345.6px"></div>
<div class="ig" style="left:399.7px;top:538.1px;height:64.8px"></div>
<div class="ig" style="left:399.7px;top:646.1px;height:129.6px"></div>
<div class="ig" style="left:434.4px;top:667.7px;height:86.4px"></div>
<div class="ig" style="left:469.0px;top:689.3px;height:43.2px"></div>
<div class="ig" style="left:365.0px;top:905.3px;height:64.8px"></div>
</div>
<div class="ab" style="left:0;top:959.2px;width:1785px;height:26.8px;background:#0078c8"></div>
<div class="ab" style="left:0;top:959.2px;width:34px;height:26.8px;background:#16825d"></div>
<div class="ab" style="left:283.4px;top:959.2px;width:105.6px;height:26.8px;background:#c72e0f"></div>
<div class="ab" style="left:389px;top:959.2px;width:187.8px;height:26.8px;background:#7a6400"></div>
<div class="t" style="left:81px;top:963.1px;font-size:14.8px;color:#ffffff;letter-spacing:0.221px;">Launchpad</div>
<div class="t" style="left:196.4px;top:963.1px;font-size:14.8px;color:#ffffff;">0</div>
<div class="t" style="left:230.6px;top:963.1px;font-size:14.8px;color:#ffffff;">0</div>
<div class="t" style="left:264.6px;top:963.1px;font-size:14.8px;color:#ffffff;">6</div>
<div class="t" style="left:295.2px;top:963.1px;font-size:14.8px;color:#ffffff;letter-spacing:0.338px;">Jest:</div>
<div class="t" style="left:353px;top:963.1px;font-size:14.8px;color:#ffffff;">|</div>
<div class="t" style="left:401.6px;top:963.1px;font-size:14.8px;color:#ffffff;letter-spacing:0.141px;">Jest-WS:</div>
<div class="t" style="left:488.2px;top:963.1px;font-size:14.8px;color:#ffffff;">0</div>
<div class="t" style="left:522.4px;top:963.1px;font-size:14.8px;color:#ffffff;">0</div>
<div class="t" style="left:556.3px;top:963.1px;font-size:14.8px;color:#ffffff;">0</div>
<div class="t" style="left:771px;top:963.1px;font-size:14.8px;color:#ffffff;letter-spacing:0.200px;">Ln 16, Col 1</div>
<div class="t" style="left:873px;top:963.1px;font-size:14.8px;color:#ffffff;letter-spacing:0.148px;">Spaces: 4</div>
<div class="t" style="left:959px;top:963.1px;font-size:14.8px;color:#ffffff;letter-spacing:0.520px;">UTF-8</div>
<div class="t" style="left:1022px;top:963.1px;font-size:14.8px;color:#ffffff;letter-spacing:-0.281px;">LF</div>
<div class="t" style="left:1058px;top:963.1px;font-size:14.8px;color:#ffffff;letter-spacing:4.109px;">{}</div>
<div class="t" style="left:1080px;top:963.1px;font-size:14.8px;color:#ffffff;letter-spacing:0.384px;">Python</div>
<div class="t" style="left:1145px;top:963.1px;font-size:14.8px;color:#ffffff;letter-spacing:0.614px;">3.13.0 ('pro-vs-py-313': conda)</div>
<div class="t" style="left:1404px;top:963.1px;font-size:14.8px;color:#ffffff;letter-spacing:0.000px;">Go Live</div>
<div class="t" style="left:1495px;top:963.1px;font-size:14.8px;color:#ffffff;letter-spacing:0.237px;">base + local</div>
<div class="t" style="left:1689px;top:963.1px;font-size:14.8px;color:#ffffff;letter-spacing:0.328px;">Prettier</div>
<svg class="ab" style="left:0;top:960px" width="1785" height="26" viewBox="0 960 1785 26" fill="none" stroke="#ffffff" stroke-width="1.15" stroke-linejoin="round"><path d="M8 972L13.2 976.2L8 980.4M18.8 966.6L13.8 970.8L18.8 975" stroke-width="1.2"/><path d="M57.6 966.4C53.6 966.6 50.2 968.8 48.6 972.6L51.6 975.8C55.2 974.2 57.6 970.6 57.6 966.4ZM48.6 972.4L45.4 972.6L47.6 969.8L50.2 969.8M51.8 975.6L51.6 978.8L54.4 976.6L54.4 974M46.8 975.2C45.6 976 45.4 978 45.2 979.2C46.4 979 48.4 978.8 49.2 977.6"/><circle cx="53.4" cy="970.6" r="1.2"/><path d="M62 979.6L64.6 977M64 972.4L69 977.4L66.6 979.2C65.2 980 63.6 979.6 62.6 978.6C61.6 977.6 61.4 976 62.2 974.8ZM74.6 966.6L72 969.2M72.6 973.8L67.6 968.8L70 967C71.4 966.2 73 966.6 74 967.6C75 968.6 75.2 970.2 74.4 971.4ZM66.4 972L68 970.4M69.4 975L71 973.4"/><circle cx="183.2" cy="973" r="6.5"/><path d="M180.6 970.4L185.79999999999998 975.6M185.79999999999998 970.4L180.6 975.6"/><path d="M217.2 966.4L223.89999999999998 978.6H210.5Z"/><path d="M217.2 970.6V974.8M217.2 976V977.2"/><circle cx="251.4" cy="973" r="6.5"/><path d="M251.4 972.2V976.2M251.4 969.6V970.8"/><path d="M340.4 966.4L347.09999999999997 978.6H333.7Z"/><path d="M340.4 970.6V974.8M340.4 976V977.2"/><path d="M362.6 974.2C364 970.8 366.4 969.4 369.2 969.4C372 969.4 374.4 970.8 375.8 974.2"/><circle cx="369.2" cy="974" r="2.1"/><circle cx="475.2" cy="973" r="6.5"/><path d="M472.4 973.2L474.4 975.4L478.2 970.8"/><circle cx="509.2" cy="973" r="6.5"/><path d="M506.59999999999997 970.4L511.8 975.6M511.8 970.4L506.59999999999997 975.6"/><circle cx="543" cy="973" r="6.5"/><path d="M541.2 971.4C541.2 969 545 969 545 971.2C545 972.6 543 972.6 543 974.2M543 975.4V976.6"/><circle cx="1391.4" cy="971.6" r="1.4" fill="#fff"/><path d="M1391.4 972V979M1388.6 974.9A3.6 3.6 0 1 1 1394.2 974.9M1387 978.2A6.6 6.6 0 1 1 1395.8 978.2" stroke-width="1.15"/><path d="M1482 967.4L1487.6 973L1482 978.6L1476.4 973Z" fill="#ffffff" stroke="none"/><path stroke="none" fill="#ffffff" d="M1640.2 965.6Q1641.088 972.112 1647.6000000000001 973Q1641.088 973.888 1640.2 980.4Q1639.3120000000001 973.888 1632.8 973Q1639.3120000000001 972.112 1640.2 965.6Z"/><circle cx="1676.4" cy="973" r="6.8"/><path d="M1671.7 977.9L1681.1000000000001 968.1"/><path d="M1760.8 977H1772.8L1771.4 974.6V971C1771.4 967.8 1769.4 965.6 1766.8 965.6C1764.2 965.6 1762.2 967.8 1762.2 971V974.6ZM1765 977.2C1765 979.8 1768.6 979.8 1768.6 977.2"/></svg>
<svg class="ab" style="left:1594.3200000000002px;top:963.12px" width="20.16" height="20.16" viewBox="-12 -12 24 24"><path fill="#ffffff" fill-rule="evenodd" d="M-4.2 -8.6C-7 -8.6 -8.3 -7 -8.3 -4.6C-8.3 -3.6 -8.2 -2.8 -7.9 -2.2C-9.2 -1.2 -9.8 0 -9.8 1.4V4.2C-9.8 5 -9.4 5.6 -8.8 6C-6.4 7.8 -3.2 8.8 0 8.8C3.2 8.8 6.4 7.8 8.8 6C9.4 5.6 9.8 5 9.8 4.2V1.4C9.8 0 9.2 -1.2 7.9 -2.2C8.2 -2.8 8.3 -3.6 8.3 -4.6C8.3 -7 7 -8.6 4.2 -8.6C2.2 -8.6 0.8 -7.8 0 -6.4C-0.8 -7.8 -2.2 -8.6 -4.2 -8.6ZM-4.2 -6.6C-2.4 -6.6 -1.4 -5.6 -1.4 -4C-1.4 -2.4 -2.4 -1.6 -4.2 -1.6C-5.8 -1.6 -6.4 -2.4 -6.4 -4C-6.4 -5.6 -5.8 -6.6 -4.2 -6.6ZM4.2 -6.6C5.8 -6.6 6.4 -5.6 6.4 -4C6.4 -2.4 5.8 -1.6 4.2 -1.6C2.4 -1.6 1.4 -2.4 1.4 -4C1.4 -5.6 2.4 -6.6 4.2 -6.6ZM-7.4 0.6C-5 0.2 -2 0.2 0 0.6C2 0.2 5 0.2 7.4 0.6V4.6C5.4 6 2.6 6.8 0 6.8C-2.6 6.8 -5.4 6 -7.4 4.6Z"/><rect x="-3.6" y="1.6" width="1.9" height="3.6" rx="0.9" fill="#ffffff"/><rect x="1.7" y="1.6" width="1.9" height="3.6" rx="0.9" fill="#ffffff"/></svg>
</div>
</body></html>
